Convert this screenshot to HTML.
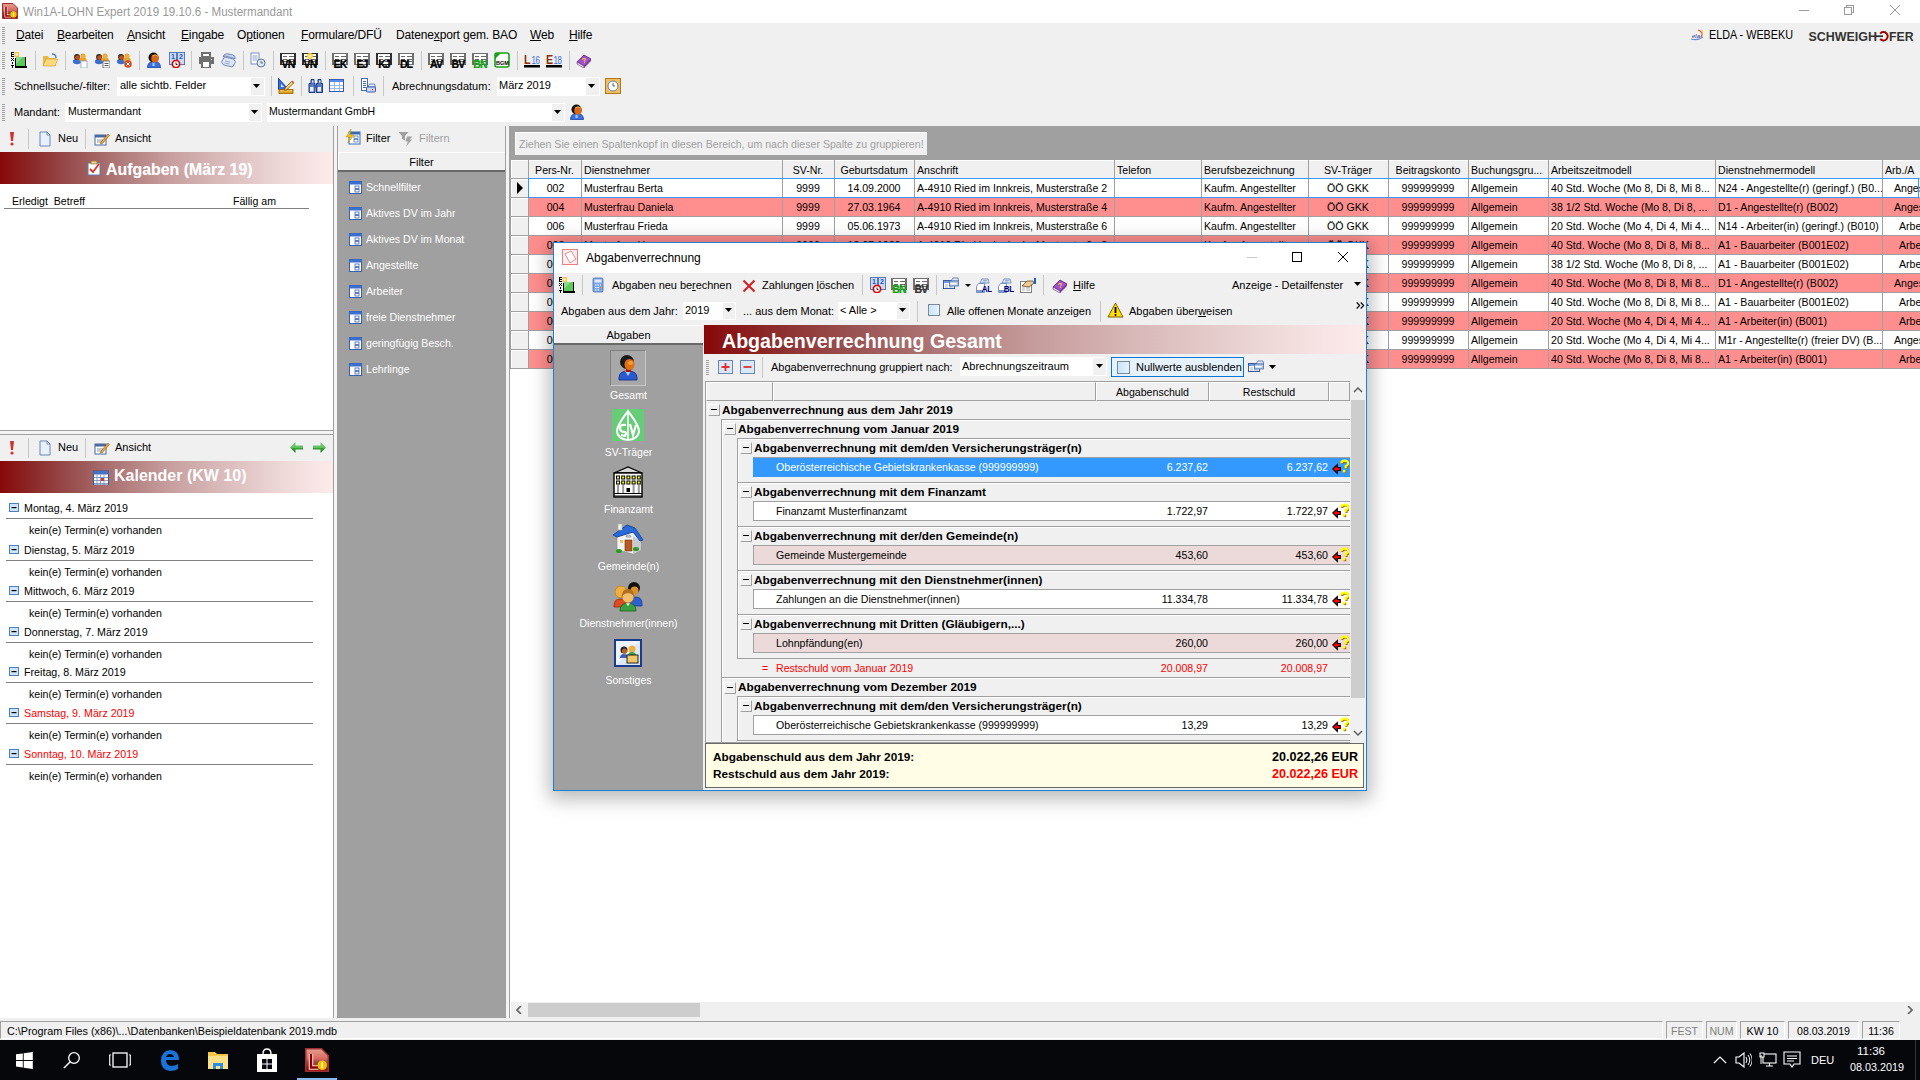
<!DOCTYPE html><html><head><meta charset="utf-8"><style>
*{margin:0;padding:0}
html,body{width:1920px;height:1080px;overflow:hidden;background:#f0f0f0;font-family:"Liberation Sans",sans-serif;position:relative}
body>div{position:absolute}
.t{white-space:nowrap}
u{text-decoration:underline;text-underline-offset:1px}
</style></head><body><div style="left:0px;top:0px;width:1920px;height:23px;background:#fff"></div><div style="left:0px;top:23px;width:1920px;height:103px;background:#f0f0f0"></div><svg style="position:absolute;left:2px;top:3px" width="16" height="16" viewBox="0 0 16 16"><defs><linearGradient id="ag1" x1="0" y1="0" x2="0" y2="1"><stop offset="0" stop-color="#e4a090"/><stop offset=".45" stop-color="#d86a60"/><stop offset=".55" stop-color="#a05050"/><stop offset="1" stop-color="#8a0000"/></linearGradient></defs><path d="M.5 .5h10.5l4.5 4.5v10.5H.5z" fill="url(#ag1)" stroke="#a03030" stroke-width="1"/><path d="M4 4v9h5" stroke="#fbe0d0" stroke-width="3" fill="none"/><path d="M4 4v9h5" stroke="#900000" stroke-width="1.6" fill="none"/><circle cx="11.5" cy="11.5" r="3.2" fill="#f0c000"/><path d="M11.5 9.5v4" stroke="#fff6c0" stroke-width="1"/></svg><div class="t" style="left:23px;top:2px;height:20px;line-height:20px;font-size:12.5px;color:#999;font-weight:400;transform:scaleX(0.929);transform-origin:0 0">Win1A-LOHN Expert 2019 19.10.6 - Mustermandant</div><div style="left:1799px;top:10px;width:10px;height:1px;background:#999"></div><div style="left:1846px;top:5px;width:8px;height:8px;border:1px solid #999;box-sizing:border-box"></div><div style="left:1844px;top:7px;width:8px;height:8px;background:#fff;border:1px solid #999;box-sizing:border-box"></div><svg style="position:absolute;left:1889px;top:4px" width="12" height="12" viewBox="0 0 12 12"><path d="M1 1l10 10M11 1L1 11" stroke="#999" stroke-width="1"/></svg><div style="left:2px;top:27px;width:3px;height:1px;background:#a0a0a0"></div><div style="left:2px;top:29px;width:3px;height:1px;background:#a0a0a0"></div><div style="left:2px;top:31px;width:3px;height:1px;background:#a0a0a0"></div><div style="left:2px;top:33px;width:3px;height:1px;background:#a0a0a0"></div><div style="left:2px;top:35px;width:3px;height:1px;background:#a0a0a0"></div><div style="left:2px;top:37px;width:3px;height:1px;background:#a0a0a0"></div><div style="left:2px;top:39px;width:3px;height:1px;background:#a0a0a0"></div><div style="left:2px;top:41px;width:3px;height:1px;background:#a0a0a0"></div><div style="left:2px;top:43px;width:3px;height:1px;background:#a0a0a0"></div><div class="t" style="left:16px;top:25px;height:20px;line-height:20px;font-size:12px;color:#000;font-weight:400;letter-spacing:-0.15px"><u>D</u>atei</div><div class="t" style="left:57px;top:25px;height:20px;line-height:20px;font-size:12px;color:#000;font-weight:400;letter-spacing:-0.15px"><u>B</u>earbeiten</div><div class="t" style="left:127px;top:25px;height:20px;line-height:20px;font-size:12px;color:#000;font-weight:400;letter-spacing:-0.15px"><u>A</u>nsicht</div><div class="t" style="left:181px;top:25px;height:20px;line-height:20px;font-size:12px;color:#000;font-weight:400;letter-spacing:-0.15px"><u>E</u>ingabe</div><div class="t" style="left:237px;top:25px;height:20px;line-height:20px;font-size:12px;color:#000;font-weight:400;letter-spacing:-0.15px">O<u>p</u>tionen</div><div class="t" style="left:301px;top:25px;height:20px;line-height:20px;font-size:12px;color:#000;font-weight:400;letter-spacing:-0.15px"><u>F</u>ormulare/DFÜ</div><div class="t" style="left:396px;top:25px;height:20px;line-height:20px;font-size:12px;color:#000;font-weight:400;letter-spacing:-0.15px">Datene<u>x</u>port gem. BAO</div><div class="t" style="left:530px;top:25px;height:20px;line-height:20px;font-size:12px;color:#000;font-weight:400;letter-spacing:-0.15px"><u>W</u>eb</div><div class="t" style="left:569px;top:25px;height:20px;line-height:20px;font-size:12px;color:#000;font-weight:400;letter-spacing:-0.15px"><u>H</u>ilfe</div><svg style="position:absolute;left:1689px;top:27px" width="16" height="16" viewBox="0 0 16 16"><path d="M2 12q6 2 12-2" stroke="#6a8ad0" stroke-width="1.2" fill="none"/><path d="M9 3q6 2 3 7" stroke="#e05030" stroke-width="1.3" fill="none"/><text x="3" y="11" font-size="6" font-style="italic" fill="#2040a0" font-family="Liberation Sans">ela</text><path d="M12 8q2-2 1-5" stroke="#f0c020" stroke-width="1" fill="none"/></svg><div class="t" style="left:1709px;top:25px;height:20px;line-height:20px;font-size:12px;color:#000;font-weight:400;transform:scaleX(0.9);transform-origin:0 0">ELDA - WEBEKU</div><svg style="position:absolute;left:1805px;top:28px" width="112" height="16" viewBox="0 0 112 16"><g font-family="Liberation Sans" font-weight="700" font-size="13" fill="#333"><text x="3.5" y="12.6" textLength="68.5" lengthAdjust="spacingAndGlyphs">SCHWEIGH</text><text x="84" y="12.6" textLength="24.5" lengthAdjust="spacingAndGlyphs">FER</text></g><path d="M70 8.2h8" stroke="#333" stroke-width="1.8"/><path d="M75.2 5.7A4.2 4.2 0 1 1 75.2 10.9" stroke="#a00000" stroke-width="2" fill="none"/></svg><div style="left:2px;top:52px;width:3px;height:1px;background:#a0a0a0"></div><div style="left:2px;top:54px;width:3px;height:1px;background:#a0a0a0"></div><div style="left:2px;top:56px;width:3px;height:1px;background:#a0a0a0"></div><div style="left:2px;top:58px;width:3px;height:1px;background:#a0a0a0"></div><div style="left:2px;top:60px;width:3px;height:1px;background:#a0a0a0"></div><div style="left:2px;top:62px;width:3px;height:1px;background:#a0a0a0"></div><div style="left:2px;top:64px;width:3px;height:1px;background:#a0a0a0"></div><div style="left:2px;top:66px;width:3px;height:1px;background:#a0a0a0"></div><div style="left:2px;top:68px;width:3px;height:1px;background:#a0a0a0"></div><svg style="position:absolute;left:11px;top:52px" width="16" height="16" viewBox="0 0 16 16"><g shape-rendering="crispEdges" fill="#000"><rect x="0" y="0" width="3" height="1"/><rect x="0" y="0" width="1" height="5"/><rect x="0" y="2" width="3" height="1"/><rect x="0" y="4" width="3" height="1"/><rect x="0" y="6" width="1" height="1"/><rect x="2" y="6" width="1" height="1"/><rect x="1" y="7" width="1" height="1"/><rect x="0" y="8" width="1" height="1"/><rect x="2" y="8" width="1" height="1"/><rect x="1" y="10" width="1" height="2"/><rect x="0" y="13" width="3" height="1"/><rect x="1" y="13" width="1" height="3"/><rect x="4" y="6" width="1" height="9"/><rect x="4" y="14" width="12" height="2"/><rect x="14" y="5" width="1" height="10"/></g><rect x="5" y="5" width="9" height="9" fill="#5ac85a"/><path d="M5 5h7L5 12z" fill="#8ad88a"/><rect x="3.5" y="0" width="4.5" height="5" fill="#f8c040"/><circle cx="5.7" cy="2.5" r="1.3" fill="#fff8c0"/></svg><div style="left:35px;top:51px;width:1px;height:19px;background:#c8c8c8"></div><svg style="position:absolute;left:42px;top:52px" width="16" height="16" viewBox="0 0 16 16"><path d="M1 4h5l1 2h7v8H1z" fill="#e8b84a"/><path d="M1 14l3-7h12l-3 7z" fill="#ffd97a" stroke="#c89a3a" stroke-width=".6"/><path d="M10 2q4 0 4 4" stroke="#4a7fc0" fill="none" stroke-width="1.3"/></svg><div style="left:65px;top:51px;width:1px;height:19px;background:#c8c8c8"></div><svg style="position:absolute;left:72px;top:52px" width="16" height="16" viewBox="0 0 16 16"><ellipse cx="5" cy="9.5" rx="4.05" ry="2.7" fill="#3a6fd0"/><circle cx="5" cy="5" r="2.8800000000000003" fill="#222"/><circle cx="5.36" cy="5.54" r="2.3400000000000003" fill="#c0531a"/><ellipse cx="11" cy="8.0" rx="3.6" ry="2.4000000000000004" fill="#e8a030"/><circle cx="11" cy="4" r="2.5600000000000005" fill="#e8a030"/><circle cx="11.32" cy="4.48" r="2.08" fill="#f0b040"/><rect x="9" y="9" width="6" height="7" fill="#fff" stroke="#7a9ac0" stroke-width=".7"/></svg><svg style="position:absolute;left:94px;top:52px" width="16" height="16" viewBox="0 0 16 16"><ellipse cx="5" cy="9.5" rx="4.05" ry="2.7" fill="#3a6fd0"/><circle cx="5" cy="5" r="2.8800000000000003" fill="#222"/><circle cx="5.36" cy="5.54" r="2.3400000000000003" fill="#c0531a"/><ellipse cx="11" cy="8.0" rx="3.6" ry="2.4000000000000004" fill="#e8a030"/><circle cx="11" cy="4" r="2.5600000000000005" fill="#e8a030"/><circle cx="11.32" cy="4.48" r="2.08" fill="#f0b040"/><rect x="9" y="9" width="7" height="7" fill="#fff" stroke="#555" stroke-width=".8"/><path d="M10.5 11.5h4M10.5 13.5h4" stroke="#333" stroke-width=".8"/></svg><svg style="position:absolute;left:116px;top:52px" width="16" height="16" viewBox="0 0 16 16"><ellipse cx="5" cy="9.5" rx="4.05" ry="2.7" fill="#3a6fd0"/><circle cx="5" cy="5" r="2.8800000000000003" fill="#222"/><circle cx="5.36" cy="5.54" r="2.3400000000000003" fill="#c0531a"/><ellipse cx="11" cy="8.0" rx="3.6" ry="2.4000000000000004" fill="#e8a030"/><circle cx="11" cy="4" r="2.5600000000000005" fill="#e8a030"/><circle cx="11.32" cy="4.48" r="2.08" fill="#f0b040"/><circle cx="12" cy="12" r="3.8" fill="#d0502a"/><path d="M10.5 10.5l3 3M13.5 10.5l-3 3" stroke="#fff" stroke-width="1"/></svg><div style="left:139px;top:51px;width:1px;height:19px;background:#c8c8c8"></div><svg style="position:absolute;left:146px;top:52px" width="16" height="16" viewBox="0 0 16 16"><path d="M1.5 15.5q0-6 6.5-6t6.5 6z" fill="#3a70e0" stroke="#1a40a0" stroke-width=".8"/><rect x="6.5" y="10" width="2" height="4" fill="#aad0ff"/><circle cx="7.5" cy="5.5" r="5" fill="#111"/><ellipse cx="9" cy="6.5" rx="3.8" ry="4" fill="#d86818"/><path d="M6 4q3-2 6 0" stroke="#f0a040" stroke-width="1" fill="none"/></svg><svg style="position:absolute;left:169px;top:52px" width="16" height="16" viewBox="0 0 16 16"><g shape-rendering="crispEdges"><rect x="0.5" y="0.5" width="7" height="12" fill="#c8dcf8" stroke="#5a7ab0" stroke-width="1"/><rect x="8.5" y="0.5" width="7" height="12" fill="#c8dcf8" stroke="#5a7ab0" stroke-width="1"/></g><text x="2" y="7" font-size="7" font-weight="700" fill="#1a50d0" font-family="Liberation Sans">1</text><text x="10" y="7" font-size="7" font-weight="700" fill="#1a50d0" font-family="Liberation Sans">2</text><path d="M5.5 8.5h3l2 2v3l-2 2h-3l-2-2v-3z" fill="#fff" stroke="#e00000" stroke-width="1.6"/><path d="M7 10.5v2h1.5" stroke="#000" stroke-width=".9" fill="none"/></svg><div style="left:191px;top:51px;width:1px;height:19px;background:#c8c8c8"></div><svg style="position:absolute;left:198px;top:52px" width="16" height="16" viewBox="0 0 16 16"><g shape-rendering="crispEdges"><rect x="4" y="1" width="8" height="4" fill="#fff" stroke="#707070" stroke-width="1.2"/><rect x="0.5" y="5" width="15" height="7" fill="#707070"/><rect x="4" y="9.5" width="8" height="6" fill="#fff" stroke="#707070" stroke-width="1.2"/><rect x="13" y="7" width="1" height="1" fill="#fff"/></g></svg><svg style="position:absolute;left:220px;top:52px" width="16" height="16" viewBox="0 0 16 16"><path d="M1.5 10l3-5 9 2 2 3-3 5-9-2z" fill="#dde6f6" stroke="#6a80b0" stroke-width=".9"/><path d="M3 5q1-4 6-3l4 1q3 1 2 4l-2-1-8-2z" fill="#c8d4ec" stroke="#6a80b0" stroke-width=".9"/><path d="M5 9l5 1M4.5 11l5 1" stroke="#8a9ac0" stroke-width=".8"/></svg><div style="left:243px;top:51px;width:1px;height:19px;background:#c8c8c8"></div><svg style="position:absolute;left:250px;top:52px" width="16" height="16" viewBox="0 0 16 16"><rect x="1" y="1" width="8" height="11" fill="#fff" stroke="#5a7ab0" stroke-width=".8"/><path d="M2.5 4h5M2.5 6h5M2.5 8h5" stroke="#5a7ab0" stroke-width=".7"/><circle cx="11" cy="11" r="4" fill="#dde8f8" stroke="#3a5a90" stroke-width=".8"/><path d="M11 9v2h2" stroke="#333" stroke-width=".7" fill="none"/></svg><div style="left:273px;top:51px;width:1px;height:19px;background:#c8c8c8"></div><svg style="position:absolute;left:280px;top:52px" width="16" height="16" viewBox="0 0 16 16"><g shape-rendering="crispEdges"><rect x="1" y="1.5" width="14" height="11" fill="#fff" stroke="#303030" stroke-width="1.4"/><path d="M3 4.5h4M9 4.5h5M3 7h4M9 7h5M3 9.5h4M9 9.5h5" stroke="#666" stroke-width="1"/></g><text x="8" y="16.3" text-anchor="middle" font-size="10.5" font-weight="700" fill="#000" stroke="#000" stroke-width=".3" font-family="Liberation Sans" letter-spacing="-.9">VN</text></svg><svg style="position:absolute;left:302px;top:52px" width="16" height="16" viewBox="0 0 16 16"><g shape-rendering="crispEdges"><rect x="1" y="1.5" width="14" height="11" fill="#fff" stroke="#303030" stroke-width="1.4"/><path d="M3 4.5h4M9 4.5h5M3 7h4M9 7h5M3 9.5h4M9 9.5h5" stroke="#666" stroke-width="1"/></g><text x="8" y="16.3" text-anchor="middle" font-size="10.5" font-weight="700" fill="#000" stroke="#000" stroke-width=".3" font-family="Liberation Sans" letter-spacing="-.9">VN</text><circle cx="8" cy="4" r="3" fill="#ffcc30"/><circle cx="8" cy="4" r="1.5" fill="#fff6a0"/></svg><div style="left:325px;top:51px;width:1px;height:19px;background:#c8c8c8"></div><svg style="position:absolute;left:332px;top:52px" width="16" height="16" viewBox="0 0 16 16"><g shape-rendering="crispEdges"><rect x="1" y="1.5" width="14" height="11" fill="#fff" stroke="#707070" stroke-width="1.4"/><path d="M3 4.5h4M9 4.5h5M3 7h4M9 7h5M3 9.5h4M9 9.5h5" stroke="#666" stroke-width="1"/></g><text x="8" y="16.3" text-anchor="middle" font-size="10.5" font-weight="700" fill="#000" stroke="#000" stroke-width=".3" font-family="Liberation Sans" letter-spacing="-.9">EK</text></svg><svg style="position:absolute;left:354px;top:52px" width="16" height="16" viewBox="0 0 16 16"><g shape-rendering="crispEdges"><rect x="1" y="1.5" width="14" height="11" fill="#fff" stroke="#707070" stroke-width="1.4"/><path d="M3 4.5h4M9 4.5h5M3 7h4M9 7h5M3 9.5h4M9 9.5h5" stroke="#666" stroke-width="1"/></g><text x="8" y="16.3" text-anchor="middle" font-size="10.5" font-weight="700" fill="#000" stroke="#000" stroke-width=".3" font-family="Liberation Sans" letter-spacing="-.9">EJ</text></svg><svg style="position:absolute;left:376px;top:52px" width="16" height="16" viewBox="0 0 16 16"><g shape-rendering="crispEdges"><rect x="1" y="1.5" width="14" height="11" fill="#fff" stroke="#303030" stroke-width="1.4"/><path d="M3 4.5h4M9 4.5h5M3 7h4M9 7h5M3 9.5h4M9 9.5h5" stroke="#666" stroke-width="1"/></g><text x="8" y="16.3" text-anchor="middle" font-size="10.5" font-weight="700" fill="#000" stroke="#000" stroke-width=".3" font-family="Liberation Sans" letter-spacing="-.9">KJ</text></svg><svg style="position:absolute;left:398px;top:52px" width="16" height="16" viewBox="0 0 16 16"><g shape-rendering="crispEdges"><rect x="1" y="1.5" width="14" height="11" fill="#fff" stroke="#707070" stroke-width="1.4"/><path d="M3 4.5h4M9 4.5h5M3 7h4M9 7h5M3 9.5h4M9 9.5h5" stroke="#666" stroke-width="1"/></g><text x="8" y="16.3" text-anchor="middle" font-size="10.5" font-weight="700" fill="#000" stroke="#000" stroke-width=".3" font-family="Liberation Sans" letter-spacing="-.9">DL</text></svg><div style="left:421px;top:51px;width:1px;height:19px;background:#c8c8c8"></div><svg style="position:absolute;left:428px;top:52px" width="16" height="16" viewBox="0 0 16 16"><g shape-rendering="crispEdges"><rect x="1" y="1.5" width="14" height="11" fill="#fff" stroke="#707070" stroke-width="1.4"/><path d="M3 4.5h4M9 4.5h5M3 7h4M9 7h5M3 9.5h4M9 9.5h5" stroke="#666" stroke-width="1"/></g><text x="8" y="16.3" text-anchor="middle" font-size="10.5" font-weight="700" fill="#000" stroke="#000" stroke-width=".3" font-family="Liberation Sans" letter-spacing="-.9">AV</text></svg><svg style="position:absolute;left:450px;top:52px" width="16" height="16" viewBox="0 0 16 16"><g shape-rendering="crispEdges"><rect x="1" y="1.5" width="14" height="11" fill="#fff" stroke="#707070" stroke-width="1.4"/><path d="M3 4.5h4M9 4.5h5M3 7h4M9 7h5M3 9.5h4M9 9.5h5" stroke="#666" stroke-width="1"/></g><text x="8" y="16.3" text-anchor="middle" font-size="10.5" font-weight="700" fill="#000" stroke="#000" stroke-width=".3" font-family="Liberation Sans" letter-spacing="-.9">BV</text></svg><svg style="position:absolute;left:472px;top:52px" width="16" height="16" viewBox="0 0 16 16"><g shape-rendering="crispEdges"><rect x="1" y="1.5" width="14" height="11" fill="#fff" stroke="#707070" stroke-width="1.4"/><path d="M3 4.5h4M9 4.5h5M3 7h4M9 7h5M3 9.5h4M9 9.5h5" stroke="#666" stroke-width="1"/></g><text x="8" y="16.3" text-anchor="middle" font-size="10.5" font-weight="700" fill="#18a018" stroke="#18a018" stroke-width=".3" font-family="Liberation Sans" letter-spacing="-.9">BN</text></svg><svg style="position:absolute;left:494px;top:52px" width="16" height="16" viewBox="0 0 16 16"><rect x="1" y="1" width="14" height="14" rx="2" fill="#fff" stroke="#18a018" stroke-width="1.6"/><path d="M1 1h6l-6 6z" fill="#18a018"/><text x="2" y="13" font-size="5.5" font-weight="700" fill="#000" font-family="Liberation Sans">BGM</text></svg><div style="left:517px;top:51px;width:1px;height:19px;background:#c8c8c8"></div><svg style="position:absolute;left:524px;top:52px" width="16" height="16" viewBox="0 0 16 16"><text x="0" y="12" font-size="12.5" font-weight="700" fill="#8b3000" font-family="Liberation Sans" transform="scale(.85,1)">L</text><text x="10.5" y="12" font-size="11" fill="#3a6ae8" font-family="Liberation Sans" transform="scale(.72,1)" letter-spacing="-.8">16</text><rect x="0" y="13" width="16" height="2.5" fill="#000"/></svg><svg style="position:absolute;left:546px;top:52px" width="16" height="16" viewBox="0 0 16 16"><text x="0" y="12" font-size="12.5" font-weight="700" fill="#8b3000" font-family="Liberation Sans" transform="scale(.85,1)">E</text><text x="10.5" y="12" font-size="11" fill="#3a6ae8" font-family="Liberation Sans" transform="scale(.72,1)" letter-spacing="-.8">18</text><rect x="0" y="13" width="16" height="2.5" fill="#000"/></svg><div style="left:569px;top:51px;width:1px;height:19px;background:#c8c8c8"></div><svg style="position:absolute;left:576px;top:52px" width="16" height="16" viewBox="0 0 16 16"><path d="M1 10l7-7 7 4-7 7z" fill="#a050c8" stroke="#5a2080" stroke-width=".8"/><path d="M1 10v2l7 4v-2z" fill="#eee" stroke="#5a2080" stroke-width=".6"/><path d="M8 14v2l7-7V7z" fill="#7a3aa0"/><text x="6" y="11" font-size="7" font-weight="700" fill="#ffd030" font-family="Liberation Sans" transform="rotate(-10 8 8)">?</text></svg><div style="left:2px;top:78px;width:3px;height:1px;background:#a0a0a0"></div><div style="left:2px;top:80px;width:3px;height:1px;background:#a0a0a0"></div><div style="left:2px;top:82px;width:3px;height:1px;background:#a0a0a0"></div><div style="left:2px;top:84px;width:3px;height:1px;background:#a0a0a0"></div><div style="left:2px;top:86px;width:3px;height:1px;background:#a0a0a0"></div><div style="left:2px;top:88px;width:3px;height:1px;background:#a0a0a0"></div><div style="left:2px;top:90px;width:3px;height:1px;background:#a0a0a0"></div><div style="left:2px;top:92px;width:3px;height:1px;background:#a0a0a0"></div><div style="left:2px;top:94px;width:3px;height:1px;background:#a0a0a0"></div><div class="t" style="left:14px;top:76px;height:20px;line-height:20px;font-size:11px;color:#000;font-weight:400;">Schnellsuche/-filter:</div><div style="left:117px;top:77px;width:148px;height:19px;background:#fff"></div><div style="left:250px;top:77px;width:15px;height:19px;background:#f0f0f0;border:1px solid #fff;box-sizing:border-box"></div><svg style="position:absolute;left:253px;top:84px" width="8" height="5" viewBox="0 0 8 5"><path d="M0 0h7L3.5 4z" fill="#000"/></svg><div class="t" style="left:120px;top:75px;height:20px;line-height:20px;font-size:11px;color:#000;font-weight:400;">alle sichtb. Felder</div><div style="left:271px;top:76px;width:1px;height:20px;background:#c8c8c8"></div><div style="left:301px;top:76px;width:1px;height:20px;background:#c8c8c8"></div><div style="left:353px;top:76px;width:1px;height:20px;background:#c8c8c8"></div><div style="left:383px;top:76px;width:1px;height:20px;background:#c8c8c8"></div><svg style="position:absolute;left:278px;top:78px" width="16" height="16" viewBox="0 0 16 16"><path d="M0.5 0.5v11h10z" fill="#3a6ee8" stroke="#1a40a0" stroke-width="1"/><path d="M3 6v3h3z" fill="#f0f0f0"/><rect x="1" y="11.5" width="14" height="4" fill="#e0a020" stroke="#a06000" stroke-width=".8"/><path d="M3 12v1.5M5 12v1.5M7 12v1.5M9 12v1.5M11 12v1.5M13 12v1.5" stroke="#fff4a0" stroke-width=".7"/><path d="M7 10l6.5-6.5 1.8 1.8L8.8 11.8 6.5 12.3z" fill="#f8d060" stroke="#604010" stroke-width=".7"/><path d="M13.5 3.5l1-1 1.8 1.8-1 1z" fill="#e05050"/></svg><svg style="position:absolute;left:308px;top:78px" width="16" height="16" viewBox="0 0 16 16"><g stroke="#1a3a80" stroke-width="1"><path d="M3 1.5h3v4h1v9H1v-9h2z" fill="#5a7ac8"/><path d="M10 1.5h3v4h1.5v9h-6v-9H10z" fill="#5a7ac8"/></g><rect x="2" y="9" width="3.5" height="4.5" fill="#e8eefa"/><rect x="9.5" y="9" width="3.5" height="4.5" fill="#e8eefa"/><rect x="4" y="2.5" width="1.5" height="2" fill="#e8eefa"/><rect x="11" y="2.5" width="1.5" height="2" fill="#e8eefa"/><rect x="6.5" y="7" width="3" height="3" fill="#3a5aa8"/></svg><svg style="position:absolute;left:329px;top:78px" width="16" height="16" viewBox="0 0 16 16"><g shape-rendering="crispEdges"><rect x="0.5" y="1.5" width="14" height="12" fill="#fff" stroke="#3a5ab0" stroke-width="1"/><rect x="1" y="2" width="13" height="2" fill="#5a8ae8"/><path d="M1 7h13M1 10h13M5.5 4v9M10 4v9" stroke="#9ab8e8" stroke-width="1"/></g></svg><svg style="position:absolute;left:360px;top:78px" width="16" height="16" viewBox="0 0 16 16"><g shape-rendering="crispEdges"><rect x="1.5" y="0.5" width="6" height="12" fill="#fff" stroke="#4a6ab0" stroke-width="1"/><path d="M3 3h3M3 5h3M3 7h3M3 9h3" stroke="#4a6ab0" stroke-width="1"/></g><path d="M8 9l1.5-3h5l1 3z" fill="#e8f0fa" stroke="#4a6ab0" stroke-width=".8"/><rect x="6.5" y="9" width="9" height="5" rx="1" fill="#c8d8f0" stroke="#3a5ab0" stroke-width="1"/><rect x="12" y="11" width="1.2" height="1.2" fill="#e03030"/></svg><div class="t" style="left:392px;top:76px;height:20px;line-height:20px;font-size:11px;color:#000;font-weight:400;">Abrechnungsdatum:</div><div style="left:497px;top:77px;width:103px;height:19px;background:#fff"></div><div style="left:585px;top:77px;width:15px;height:19px;background:#f0f0f0;border:1px solid #fff;box-sizing:border-box"></div><svg style="position:absolute;left:588px;top:84px" width="8" height="5" viewBox="0 0 8 5"><path d="M0 0h7L3.5 4z" fill="#000"/></svg><div class="t" style="left:499px;top:75px;height:20px;line-height:20px;font-size:11px;color:#000;font-weight:400;">März 2019</div><svg style="position:absolute;left:605px;top:78px" width="16" height="16" viewBox="0 0 16 16"><rect x="0.5" y="0.5" width="15" height="15" fill="#f0c060" stroke="#b07820" stroke-width="1"/><circle cx="8" cy="8" r="5" fill="#fff" stroke="#6080b0" stroke-width="1"/><path d="M8 5v3h2" stroke="#333" stroke-width=".8" fill="none"/></svg><div style="left:2px;top:104px;width:3px;height:1px;background:#a0a0a0"></div><div style="left:2px;top:106px;width:3px;height:1px;background:#a0a0a0"></div><div style="left:2px;top:108px;width:3px;height:1px;background:#a0a0a0"></div><div style="left:2px;top:110px;width:3px;height:1px;background:#a0a0a0"></div><div style="left:2px;top:112px;width:3px;height:1px;background:#a0a0a0"></div><div style="left:2px;top:114px;width:3px;height:1px;background:#a0a0a0"></div><div style="left:2px;top:116px;width:3px;height:1px;background:#a0a0a0"></div><div style="left:2px;top:118px;width:3px;height:1px;background:#a0a0a0"></div><div style="left:2px;top:120px;width:3px;height:1px;background:#a0a0a0"></div><div class="t" style="left:14px;top:102px;height:20px;line-height:20px;font-size:11px;color:#000;font-weight:400;">Mandant:</div><div style="left:65px;top:103px;width:197px;height:19px;background:#fff"></div><div style="left:248px;top:103px;width:14px;height:19px;background:#f0f0f0;border:1px solid #fff;box-sizing:border-box"></div><svg style="position:absolute;left:251px;top:110px" width="8" height="5" viewBox="0 0 8 5"><path d="M0 0h7L3.5 4z" fill="#000"/></svg><div class="t" style="left:68px;top:101px;height:20px;line-height:20px;font-size:10.5px;color:#000;font-weight:400;">Mustermandant</div><div style="left:267px;top:103px;width:298px;height:19px;background:#fff"></div><div style="left:551px;top:103px;width:14px;height:19px;background:#f0f0f0;border:1px solid #fff;box-sizing:border-box"></div><svg style="position:absolute;left:554px;top:110px" width="8" height="5" viewBox="0 0 8 5"><path d="M0 0h7L3.5 4z" fill="#000"/></svg><div class="t" style="left:269px;top:101px;height:20px;line-height:20px;font-size:10.5px;color:#000;font-weight:400;">Mustermandant GmbH</div><svg style="position:absolute;left:569px;top:104px" width="16" height="16" viewBox="0 0 16 16"><path d="M1.5 15.5q0-6 6.5-6t6.5 6z" fill="#3a70e0" stroke="#1a40a0" stroke-width=".8"/><rect x="6.5" y="10" width="2" height="4" fill="#aad0ff"/><circle cx="7.5" cy="5.5" r="5" fill="#111"/><ellipse cx="9" cy="6.5" rx="3.8" ry="4" fill="#d86818"/><path d="M6 4q3-2 6 0" stroke="#f0a040" stroke-width="1" fill="none"/></svg><div style="left:0px;top:126px;width:333px;height:892px;background:#fff"></div><div style="left:0px;top:126px;width:333px;height:26px;background:#f0f0f0"></div><svg style="position:absolute;left:4px;top:131px" width="16" height="16" viewBox="0 0 16 16"><path d="M6 1h4l-1 9H7z" fill="#d03030"/><circle cx="8" cy="13" r="1.6" fill="#d03030"/></svg><div style="left:28px;top:129px;width:1px;height:20px;background:#c8c8c8"></div><svg style="position:absolute;left:37px;top:131px" width="16" height="16" viewBox="0 0 16 16"><path d="M3 1h7l3 3v11H3z" fill="#e8f0fc" stroke="#5a7ab0" stroke-width=".9"/><path d="M10 1v3h3" fill="none" stroke="#5a7ab0" stroke-width=".8"/></svg><div class="t" style="left:58px;top:128px;height:20px;line-height:20px;font-size:11px;color:#000;font-weight:400;">Neu</div><div style="left:85px;top:129px;width:1px;height:20px;background:#c8c8c8"></div><svg style="position:absolute;left:94px;top:131px" width="16" height="16" viewBox="0 0 16 16"><rect x="1" y="4" width="11" height="10" fill="#fff" stroke="#4a6aa0" stroke-width="1"/><rect x="1" y="4" width="11" height="2.5" fill="#4a6aa0"/><path d="M3 9h6M3 11h6" stroke="#4a6aa0" stroke-width=".7"/><path d="M7 11l7-8 1.5 1.5-7 8-2 .5z" fill="#f0a030" stroke="#805010" stroke-width=".5"/></svg><div class="t" style="left:115px;top:128px;height:20px;line-height:20px;font-size:11px;color:#000;font-weight:400;">Ansicht</div><div style="left:0px;top:152px;width:333px;height:32px;background:linear-gradient(to right,#880808 0%,#8c2a2a 10%,#995050 22%,#ae7676 35%,#c69c9c 50%,#d8b8b8 65%,#e8d0d0 80%,#f6e2e2 92%,#fdeaea 100%);image-rendering:pixelated"></div><svg style="position:absolute;left:87px;top:161px" width="14" height="15" viewBox="0 0 14 15"><rect x="1" y="2" width="12" height="12" fill="#fff" stroke="#5a7ab0" stroke-width="1"/><rect x="4" y="0" width="6" height="3" fill="#f0d080" stroke="#806020" stroke-width=".6"/><path d="M3 8l3 3 6-8" stroke="#e03020" stroke-width="1.8" fill="none"/></svg><div class="t" style="left:106px;top:160px;height:20px;line-height:20px;font-size:15.9px;color:#fff;font-weight:700;text-shadow:0 0 1px rgba(255,255,255,.4)">Aufgaben (März 19)</div><div class="t" style="left:12px;top:191px;height:20px;line-height:20px;font-size:10.6px;color:#000;font-weight:400;">Erledigt&nbsp; Betreff</div><div class="t" style="left:233px;top:191px;height:20px;line-height:20px;font-size:10.6px;color:#000;font-weight:400;">Fällig am</div><div style="left:4px;top:208px;width:305px;height:1px;background:#808080"></div><div style="left:0px;top:430px;width:333px;height:5px;background:#f4f4f4"></div><div style="left:0px;top:430px;width:333px;height:1px;background:#a0a0a0"></div><div style="left:0px;top:434px;width:333px;height:1px;background:#a0a0a0"></div><div style="left:0px;top:435px;width:333px;height:26px;background:#f0f0f0"></div><svg style="position:absolute;left:4px;top:440px" width="16" height="16" viewBox="0 0 16 16"><path d="M6 1h4l-1 9H7z" fill="#d03030"/><circle cx="8" cy="13" r="1.6" fill="#d03030"/></svg><div style="left:28px;top:438px;width:1px;height:20px;background:#c8c8c8"></div><svg style="position:absolute;left:37px;top:440px" width="16" height="16" viewBox="0 0 16 16"><path d="M3 1h7l3 3v11H3z" fill="#e8f0fc" stroke="#5a7ab0" stroke-width=".9"/><path d="M10 1v3h3" fill="none" stroke="#5a7ab0" stroke-width=".8"/></svg><div class="t" style="left:58px;top:437px;height:20px;line-height:20px;font-size:11px;color:#000;font-weight:400;">Neu</div><div style="left:85px;top:438px;width:1px;height:20px;background:#c8c8c8"></div><svg style="position:absolute;left:94px;top:440px" width="16" height="16" viewBox="0 0 16 16"><rect x="1" y="4" width="11" height="10" fill="#fff" stroke="#4a6aa0" stroke-width="1"/><rect x="1" y="4" width="11" height="2.5" fill="#4a6aa0"/><path d="M3 9h6M3 11h6" stroke="#4a6aa0" stroke-width=".7"/><path d="M7 11l7-8 1.5 1.5-7 8-2 .5z" fill="#f0a030" stroke="#805010" stroke-width=".5"/></svg><div class="t" style="left:115px;top:437px;height:20px;line-height:20px;font-size:11px;color:#000;font-weight:400;">Ansicht</div><svg style="position:absolute;left:290px;top:442px" width="13" height="11" viewBox="0 0 13 11"><defs><linearGradient id="arl" x1="0" y1="0" x2="0" y2="1"><stop offset="0" stop-color="#80d080"/><stop offset=".5" stop-color="#60c060"/><stop offset=".55" stop-color="#40a040"/><stop offset="1" stop-color="#008a00"/></linearGradient></defs><path d="M0 5.5L5.5 0v3.5H13v4H5.5V11z" fill="url(#arl)"/></svg><svg style="position:absolute;left:313px;top:442px" width="13" height="11" viewBox="0 0 13 11"><defs><linearGradient id="arr" x1="0" y1="0" x2="0" y2="1"><stop offset="0" stop-color="#80d080"/><stop offset=".5" stop-color="#60c060"/><stop offset=".55" stop-color="#40a040"/><stop offset="1" stop-color="#008a00"/></linearGradient></defs><path d="M13 5.5L7.5 0v3.5H0v4h7.5V11z" fill="url(#arr)"/></svg><div style="left:0px;top:461px;width:333px;height:32px;background:linear-gradient(to right,#880808 0%,#8c2a2a 10%,#995050 22%,#ae7676 35%,#c69c9c 50%,#d8b8b8 65%,#e8d0d0 80%,#f6e2e2 92%,#fdeaea 100%)"></div><svg style="position:absolute;left:93px;top:470px" width="16" height="15" viewBox="0 0 16 15"><rect x="0.5" y="1" width="15" height="14" fill="#fff" stroke="#3a5a90" stroke-width="1"/><rect x="0.5" y="1" width="15" height="3.5" fill="#4a70c0"/><path d="M1 7.5h14M1 10.5h14M1 13.5h14M4 4.5v10M7.5 4.5v10M11 4.5v10" stroke="#6a8ac0" stroke-width=".8"/><rect x="8" y="8" width="3" height="3" fill="#e03030"/></svg><div class="t" style="left:114px;top:466px;height:20px;line-height:20px;font-size:16px;color:#fff;font-weight:700;">Kalender (KW 10)</div><svg style="position:absolute;left:9px;top:503px" width="10" height="9" viewBox="0 0 10 9"><rect x="0.5" y="0.5" width="9" height="8" fill="#cfe4fa" stroke="#4a80c0" stroke-width="1"/><rect x="2.5" y="4" width="5" height="1.2" fill="#000"/></svg><div class="t" style="left:24px;top:498px;height:20px;line-height:20px;font-size:10.7px;color:#000;font-weight:400;">Montag, 4. März 2019</div><div style="left:6px;top:518px;width:307px;height:1px;background:#808080"></div><div class="t" style="left:29px;top:520px;height:20px;line-height:20px;font-size:10.6px;color:#000;font-weight:400;">kein(e) Termin(e) vorhanden</div><svg style="position:absolute;left:9px;top:545px" width="10" height="9" viewBox="0 0 10 9"><rect x="0.5" y="0.5" width="9" height="8" fill="#cfe4fa" stroke="#4a80c0" stroke-width="1"/><rect x="2.5" y="4" width="5" height="1.2" fill="#000"/></svg><div class="t" style="left:24px;top:540px;height:20px;line-height:20px;font-size:10.7px;color:#000;font-weight:400;">Dienstag, 5. März 2019</div><div style="left:6px;top:560px;width:307px;height:1px;background:#808080"></div><div class="t" style="left:29px;top:562px;height:20px;line-height:20px;font-size:10.6px;color:#000;font-weight:400;">kein(e) Termin(e) vorhanden</div><svg style="position:absolute;left:9px;top:586px" width="10" height="9" viewBox="0 0 10 9"><rect x="0.5" y="0.5" width="9" height="8" fill="#cfe4fa" stroke="#4a80c0" stroke-width="1"/><rect x="2.5" y="4" width="5" height="1.2" fill="#000"/></svg><div class="t" style="left:24px;top:581px;height:20px;line-height:20px;font-size:10.7px;color:#000;font-weight:400;">Mittwoch, 6. März 2019</div><div style="left:6px;top:601px;width:307px;height:1px;background:#808080"></div><div class="t" style="left:29px;top:603px;height:20px;line-height:20px;font-size:10.6px;color:#000;font-weight:400;">kein(e) Termin(e) vorhanden</div><svg style="position:absolute;left:9px;top:627px" width="10" height="9" viewBox="0 0 10 9"><rect x="0.5" y="0.5" width="9" height="8" fill="#cfe4fa" stroke="#4a80c0" stroke-width="1"/><rect x="2.5" y="4" width="5" height="1.2" fill="#000"/></svg><div class="t" style="left:24px;top:622px;height:20px;line-height:20px;font-size:10.7px;color:#000;font-weight:400;">Donnerstag, 7. März 2019</div><div style="left:6px;top:642px;width:307px;height:1px;background:#808080"></div><div class="t" style="left:29px;top:644px;height:20px;line-height:20px;font-size:10.6px;color:#000;font-weight:400;">kein(e) Termin(e) vorhanden</div><svg style="position:absolute;left:9px;top:667px" width="10" height="9" viewBox="0 0 10 9"><rect x="0.5" y="0.5" width="9" height="8" fill="#cfe4fa" stroke="#4a80c0" stroke-width="1"/><rect x="2.5" y="4" width="5" height="1.2" fill="#000"/></svg><div class="t" style="left:24px;top:662px;height:20px;line-height:20px;font-size:10.7px;color:#000;font-weight:400;">Freitag, 8. März 2019</div><div style="left:6px;top:682px;width:307px;height:1px;background:#808080"></div><div class="t" style="left:29px;top:684px;height:20px;line-height:20px;font-size:10.6px;color:#000;font-weight:400;">kein(e) Termin(e) vorhanden</div><svg style="position:absolute;left:9px;top:708px" width="10" height="9" viewBox="0 0 10 9"><rect x="0.5" y="0.5" width="9" height="8" fill="#cfe4fa" stroke="#4a80c0" stroke-width="1"/><rect x="2.5" y="4" width="5" height="1.2" fill="#000"/></svg><div class="t" style="left:24px;top:703px;height:20px;line-height:20px;font-size:10.7px;color:#f00;font-weight:400;">Samstag, 9. März 2019</div><div style="left:6px;top:723px;width:307px;height:1px;background:#808080"></div><div class="t" style="left:29px;top:725px;height:20px;line-height:20px;font-size:10.6px;color:#000;font-weight:400;">kein(e) Termin(e) vorhanden</div><svg style="position:absolute;left:9px;top:749px" width="10" height="9" viewBox="0 0 10 9"><rect x="0.5" y="0.5" width="9" height="8" fill="#cfe4fa" stroke="#4a80c0" stroke-width="1"/><rect x="2.5" y="4" width="5" height="1.2" fill="#000"/></svg><div class="t" style="left:24px;top:744px;height:20px;line-height:20px;font-size:10.7px;color:#f00;font-weight:400;">Sonntag, 10. März 2019</div><div style="left:6px;top:764px;width:307px;height:1px;background:#808080"></div><div class="t" style="left:29px;top:766px;height:20px;line-height:20px;font-size:10.6px;color:#000;font-weight:400;">kein(e) Termin(e) vorhanden</div><div style="left:333px;top:126px;width:4px;height:892px;background:#f4f4f4"></div><div style="left:333px;top:126px;width:1px;height:892px;background:#a0a0a0"></div><div style="left:337px;top:126px;width:1px;height:892px;background:#a0a0a0"></div><div style="left:338px;top:126px;width:168px;height:892px;background:#a0a0a0"></div><div style="left:338px;top:126px;width:167px;height:26px;background:#f0f0f0"></div><svg style="position:absolute;left:345px;top:129px" width="16" height="16" viewBox="0 0 16 16"><rect x="4" y="3" width="11" height="12" fill="#fff" stroke="#3a6ab0" stroke-width="1"/><rect x="4" y="3" width="11" height="2.5" fill="#3a6ab0"/><rect x="9" y="7" width="4" height="2.5" fill="none" stroke="#3a6ab0" stroke-width=".7"/><rect x="9" y="10.5" width="4" height="2.5" fill="none" stroke="#3a6ab0" stroke-width=".7"/><path d="M6 0L1 8h4l-2 6 6-8H5z" fill="#f0c020" stroke="#a08000" stroke-width=".4"/></svg><div class="t" style="left:366px;top:128px;height:20px;line-height:20px;font-size:11px;color:#000;font-weight:400;">Filter</div><svg style="position:absolute;left:398px;top:131px" width="16" height="16" viewBox="0 0 16 16"><path d="M0.5 1h10l-3.5 4v4.5L4 8V5z" fill="#a0a0a0"/><path d="M9 5.5h5.5l-3 3h2.5l-6 7 2-5H7.5z" fill="#a0a0a0"/></svg><div class="t" style="left:419px;top:128px;height:20px;line-height:20px;font-size:11px;color:#a0a0a0;font-weight:400;">Filtern</div><div style="left:338px;top:152px;width:167px;height:19px;background:#f0f0f0;border-top:1px solid #fff;border-left:1px solid #fff;box-sizing:border-box"></div><div style="left:338px;top:170px;width:168px;height:2px;background:#696969"></div><div class="t" style="left:338px;top:152px;height:20px;line-height:20px;font-size:11px;color:#000;font-weight:400;width:167px;text-align:center;">Filter</div><svg style="position:absolute;left:349px;top:181px" width="13" height="13" viewBox="0 0 13 13"><rect x="0.5" y="0.5" width="12" height="12" fill="#fff" stroke="#3a60b0" stroke-width="1"/><rect x="0.5" y="0.5" width="12" height="3" fill="#3a70d0"/><rect x="6" y="5" width="4" height="2.5" fill="none" stroke="#3a60b0" stroke-width=".8"/><rect x="6" y="8.5" width="4" height="2.5" fill="none" stroke="#3a60b0" stroke-width=".8"/></svg><div class="t" style="left:366px;top:177px;height:20px;line-height:20px;font-size:10.6px;color:#fff;font-weight:400;">Schnellfilter</div><svg style="position:absolute;left:349px;top:207px" width="13" height="13" viewBox="0 0 13 13"><rect x="0.5" y="0.5" width="12" height="12" fill="#fff" stroke="#3a60b0" stroke-width="1"/><rect x="0.5" y="0.5" width="12" height="3" fill="#3a70d0"/><rect x="6" y="5" width="4" height="2.5" fill="none" stroke="#3a60b0" stroke-width=".8"/><rect x="6" y="8.5" width="4" height="2.5" fill="none" stroke="#3a60b0" stroke-width=".8"/></svg><div class="t" style="left:366px;top:203px;height:20px;line-height:20px;font-size:10.6px;color:#fff;font-weight:400;">Aktives DV im Jahr</div><svg style="position:absolute;left:349px;top:233px" width="13" height="13" viewBox="0 0 13 13"><rect x="0.5" y="0.5" width="12" height="12" fill="#fff" stroke="#3a60b0" stroke-width="1"/><rect x="0.5" y="0.5" width="12" height="3" fill="#3a70d0"/><rect x="6" y="5" width="4" height="2.5" fill="none" stroke="#3a60b0" stroke-width=".8"/><rect x="6" y="8.5" width="4" height="2.5" fill="none" stroke="#3a60b0" stroke-width=".8"/></svg><div class="t" style="left:366px;top:229px;height:20px;line-height:20px;font-size:10.6px;color:#fff;font-weight:400;">Aktives DV im Monat</div><svg style="position:absolute;left:349px;top:259px" width="13" height="13" viewBox="0 0 13 13"><rect x="0.5" y="0.5" width="12" height="12" fill="#fff" stroke="#3a60b0" stroke-width="1"/><rect x="0.5" y="0.5" width="12" height="3" fill="#3a70d0"/><rect x="6" y="5" width="4" height="2.5" fill="none" stroke="#3a60b0" stroke-width=".8"/><rect x="6" y="8.5" width="4" height="2.5" fill="none" stroke="#3a60b0" stroke-width=".8"/></svg><div class="t" style="left:366px;top:255px;height:20px;line-height:20px;font-size:10.6px;color:#fff;font-weight:400;">Angestellte</div><svg style="position:absolute;left:349px;top:285px" width="13" height="13" viewBox="0 0 13 13"><rect x="0.5" y="0.5" width="12" height="12" fill="#fff" stroke="#3a60b0" stroke-width="1"/><rect x="0.5" y="0.5" width="12" height="3" fill="#3a70d0"/><rect x="6" y="5" width="4" height="2.5" fill="none" stroke="#3a60b0" stroke-width=".8"/><rect x="6" y="8.5" width="4" height="2.5" fill="none" stroke="#3a60b0" stroke-width=".8"/></svg><div class="t" style="left:366px;top:281px;height:20px;line-height:20px;font-size:10.6px;color:#fff;font-weight:400;">Arbeiter</div><svg style="position:absolute;left:349px;top:311px" width="13" height="13" viewBox="0 0 13 13"><rect x="0.5" y="0.5" width="12" height="12" fill="#fff" stroke="#3a60b0" stroke-width="1"/><rect x="0.5" y="0.5" width="12" height="3" fill="#3a70d0"/><rect x="6" y="5" width="4" height="2.5" fill="none" stroke="#3a60b0" stroke-width=".8"/><rect x="6" y="8.5" width="4" height="2.5" fill="none" stroke="#3a60b0" stroke-width=".8"/></svg><div class="t" style="left:366px;top:307px;height:20px;line-height:20px;font-size:10.6px;color:#fff;font-weight:400;">freie Dienstnehmer</div><svg style="position:absolute;left:349px;top:337px" width="13" height="13" viewBox="0 0 13 13"><rect x="0.5" y="0.5" width="12" height="12" fill="#fff" stroke="#3a60b0" stroke-width="1"/><rect x="0.5" y="0.5" width="12" height="3" fill="#3a70d0"/><rect x="6" y="5" width="4" height="2.5" fill="none" stroke="#3a60b0" stroke-width=".8"/><rect x="6" y="8.5" width="4" height="2.5" fill="none" stroke="#3a60b0" stroke-width=".8"/></svg><div class="t" style="left:366px;top:333px;height:20px;line-height:20px;font-size:10.6px;color:#fff;font-weight:400;">geringfügig Besch.</div><svg style="position:absolute;left:349px;top:363px" width="13" height="13" viewBox="0 0 13 13"><rect x="0.5" y="0.5" width="12" height="12" fill="#fff" stroke="#3a60b0" stroke-width="1"/><rect x="0.5" y="0.5" width="12" height="3" fill="#3a70d0"/><rect x="6" y="5" width="4" height="2.5" fill="none" stroke="#3a60b0" stroke-width=".8"/><rect x="6" y="8.5" width="4" height="2.5" fill="none" stroke="#3a60b0" stroke-width=".8"/></svg><div class="t" style="left:366px;top:359px;height:20px;line-height:20px;font-size:10.6px;color:#fff;font-weight:400;">Lehrlinge</div><div style="left:506px;top:126px;width:4px;height:892px;background:#f4f4f4"></div><div style="left:505px;top:126px;width:1px;height:892px;background:#a0a0a0"></div><div style="left:509px;top:126px;width:1px;height:892px;background:#a0a0a0"></div><div style="left:510px;top:126px;width:1410px;height:892px;background:#fff"></div><div style="left:510px;top:126px;width:1410px;height:34px;background:#a0a0a0"></div><div style="left:515px;top:132px;width:412px;height:23px;background:#f0f0f0;border-top:1px solid #fff;border-left:1px solid #fff;box-sizing:border-box"></div><div class="t" style="left:519px;top:134px;height:20px;line-height:20px;font-size:10.6px;color:#a0a0a0;font-weight:400;">Ziehen Sie einen Spaltenkopf in diesen Bereich, um nach dieser Spalte zu gruppieren!</div><div style="left:510px;top:160px;width:1px;height:209px;background:#a0a0a0"></div><div style="left:511px;top:160px;width:1409px;height:210px;overflow:hidden"><div style="position:absolute;left:0px;top:0px;width:1409px;height:18px;background:#f0f0f0"></div><div style="position:absolute;left:0px;top:0px;width:17px;height:18px;border-top:1px solid #fff;border-left:1px solid #fff;box-sizing:border-box"></div><div style="position:absolute;left:17px;top:0px;width:53px;height:18px;border-top:1px solid #fff;border-left:1px solid #fff;box-sizing:border-box"></div><div class="t" style="position:absolute;left:17px;top:0px;height:20px;line-height:20px;font-size:10.6px;color:#000;width:53px;text-align:center">Pers-Nr.</div><div style="position:absolute;left:70px;top:0px;width:201px;height:18px;border-top:1px solid #fff;border-left:1px solid #fff;box-sizing:border-box"></div><div class="t" style="position:absolute;left:73px;top:0px;height:20px;line-height:20px;font-size:10.6px;color:#000;text-align:left">Dienstnehmer</div><div style="position:absolute;left:271px;top:0px;width:52px;height:18px;border-top:1px solid #fff;border-left:1px solid #fff;box-sizing:border-box"></div><div class="t" style="position:absolute;left:271px;top:0px;height:20px;line-height:20px;font-size:10.6px;color:#000;width:52px;text-align:center">SV-Nr.</div><div style="position:absolute;left:323px;top:0px;width:80px;height:18px;border-top:1px solid #fff;border-left:1px solid #fff;box-sizing:border-box"></div><div class="t" style="position:absolute;left:323px;top:0px;height:20px;line-height:20px;font-size:10.6px;color:#000;width:80px;text-align:center">Geburtsdatum</div><div style="position:absolute;left:403px;top:0px;width:200px;height:18px;border-top:1px solid #fff;border-left:1px solid #fff;box-sizing:border-box"></div><div class="t" style="position:absolute;left:406px;top:0px;height:20px;line-height:20px;font-size:10.6px;color:#000;text-align:left">Anschrift</div><div style="position:absolute;left:603px;top:0px;width:87px;height:18px;border-top:1px solid #fff;border-left:1px solid #fff;box-sizing:border-box"></div><div class="t" style="position:absolute;left:606px;top:0px;height:20px;line-height:20px;font-size:10.6px;color:#000;text-align:left">Telefon</div><div style="position:absolute;left:690px;top:0px;width:107px;height:18px;border-top:1px solid #fff;border-left:1px solid #fff;box-sizing:border-box"></div><div class="t" style="position:absolute;left:693px;top:0px;height:20px;line-height:20px;font-size:10.6px;color:#000;text-align:left">Berufsbezeichnung</div><div style="position:absolute;left:797px;top:0px;width:80px;height:18px;border-top:1px solid #fff;border-left:1px solid #fff;box-sizing:border-box"></div><div class="t" style="position:absolute;left:797px;top:0px;height:20px;line-height:20px;font-size:10.6px;color:#000;width:80px;text-align:center">SV-Träger</div><div style="position:absolute;left:877px;top:0px;width:80px;height:18px;border-top:1px solid #fff;border-left:1px solid #fff;box-sizing:border-box"></div><div class="t" style="position:absolute;left:877px;top:0px;height:20px;line-height:20px;font-size:10.6px;color:#000;width:80px;text-align:center">Beitragskonto</div><div style="position:absolute;left:957px;top:0px;width:80px;height:18px;border-top:1px solid #fff;border-left:1px solid #fff;box-sizing:border-box"></div><div class="t" style="position:absolute;left:960px;top:0px;height:20px;line-height:20px;font-size:10.6px;color:#000;text-align:left">Buchungsgru...</div><div style="position:absolute;left:1037px;top:0px;width:167px;height:18px;border-top:1px solid #fff;border-left:1px solid #fff;box-sizing:border-box"></div><div class="t" style="position:absolute;left:1040px;top:0px;height:20px;line-height:20px;font-size:10.6px;color:#000;text-align:left">Arbeitszeitmodell</div><div style="position:absolute;left:1204px;top:0px;width:167px;height:18px;border-top:1px solid #fff;border-left:1px solid #fff;box-sizing:border-box"></div><div class="t" style="position:absolute;left:1207px;top:0px;height:20px;line-height:20px;font-size:10.6px;color:#000;text-align:left">Dienstnehmermodell</div><div style="position:absolute;left:1371px;top:0px;width:78px;height:18px;border-top:1px solid #fff;border-left:1px solid #fff;box-sizing:border-box"></div><div class="t" style="position:absolute;left:1374px;top:0px;height:20px;line-height:20px;font-size:10.6px;color:#000;text-align:left">Arb./A</div><div style="position:absolute;left:0px;top:18px;width:1409px;height:1px;background:#a0a0a0"></div><div style="position:absolute;left:0px;top:19px;width:17px;height:18px;background:#f0f0f0;border-top:1px solid #fff;border-left:1px solid #fff;box-sizing:border-box"></div><div style="position:absolute;left:17px;top:19px;width:1392px;height:18px;background:#fff"></div><div class="t" style="position:absolute;left:18px;top:18px;height:20px;line-height:20px;font-size:10.6px;color:#000;width:53px;text-align:center">002</div><div class="t" style="position:absolute;left:73px;top:18px;height:20px;line-height:20px;font-size:10.6px;color:#000;text-align:left">Musterfrau Berta</div><div class="t" style="position:absolute;left:271px;top:18px;height:20px;line-height:20px;font-size:10.6px;color:#000;width:52px;text-align:center">9999</div><div class="t" style="position:absolute;left:323px;top:18px;height:20px;line-height:20px;font-size:10.6px;color:#000;width:80px;text-align:center">14.09.2000</div><div class="t" style="position:absolute;left:406px;top:18px;height:20px;line-height:20px;font-size:10.6px;color:#000;text-align:left">A-4910 Ried im Innkreis, Musterstraße 2</div><div class="t" style="position:absolute;left:693px;top:18px;height:20px;line-height:20px;font-size:10.6px;color:#000;text-align:left">Kaufm. Angestellter</div><div class="t" style="position:absolute;left:797px;top:18px;height:20px;line-height:20px;font-size:10.6px;color:#000;width:80px;text-align:center">ÖÖ GKK</div><div class="t" style="position:absolute;left:877px;top:18px;height:20px;line-height:20px;font-size:10.6px;color:#000;width:80px;text-align:center">999999999</div><div class="t" style="position:absolute;left:960px;top:18px;height:20px;line-height:20px;font-size:10.6px;color:#000;text-align:left">Allgemein</div><div class="t" style="position:absolute;left:1040px;top:18px;height:20px;line-height:20px;font-size:10.6px;color:#000;text-align:left">40 Std. Woche (Mo 8, Di 8, Mi 8...</div><div class="t" style="position:absolute;left:1207px;top:18px;height:20px;line-height:20px;font-size:10.6px;color:#000;text-align:left">N24 - Angestellte(r) (geringf.) (B0...</div><div class="t" style="position:absolute;left:1383px;top:18px;height:20px;line-height:20px;font-size:10.6px;color:#000;text-align:left">Angestellte(r)</div><div style="position:absolute;left:0px;top:37px;width:1409px;height:1px;background:#a0a0a0"></div><div style="position:absolute;left:0px;top:38px;width:17px;height:18px;background:#f0f0f0;border-top:1px solid #fff;border-left:1px solid #fff;box-sizing:border-box"></div><div style="position:absolute;left:17px;top:38px;width:1392px;height:18px;background:#ff8f8f"></div><div class="t" style="position:absolute;left:18px;top:37px;height:20px;line-height:20px;font-size:10.6px;color:#000;width:53px;text-align:center">004</div><div class="t" style="position:absolute;left:73px;top:37px;height:20px;line-height:20px;font-size:10.6px;color:#000;text-align:left">Musterfrau Daniela</div><div class="t" style="position:absolute;left:271px;top:37px;height:20px;line-height:20px;font-size:10.6px;color:#000;width:52px;text-align:center">9999</div><div class="t" style="position:absolute;left:323px;top:37px;height:20px;line-height:20px;font-size:10.6px;color:#000;width:80px;text-align:center">27.03.1964</div><div class="t" style="position:absolute;left:406px;top:37px;height:20px;line-height:20px;font-size:10.6px;color:#000;text-align:left">A-4910 Ried im Innkreis, Musterstraße 4</div><div class="t" style="position:absolute;left:693px;top:37px;height:20px;line-height:20px;font-size:10.6px;color:#000;text-align:left">Kaufm. Angestellter</div><div class="t" style="position:absolute;left:797px;top:37px;height:20px;line-height:20px;font-size:10.6px;color:#000;width:80px;text-align:center">ÖÖ GKK</div><div class="t" style="position:absolute;left:877px;top:37px;height:20px;line-height:20px;font-size:10.6px;color:#000;width:80px;text-align:center">999999999</div><div class="t" style="position:absolute;left:960px;top:37px;height:20px;line-height:20px;font-size:10.6px;color:#000;text-align:left">Allgemein</div><div class="t" style="position:absolute;left:1040px;top:37px;height:20px;line-height:20px;font-size:10.6px;color:#000;text-align:left">38 1/2 Std. Woche (Mo 8, Di 8, ...</div><div class="t" style="position:absolute;left:1207px;top:37px;height:20px;line-height:20px;font-size:10.6px;color:#000;text-align:left">D1 - Angestellte(r) (B002)</div><div class="t" style="position:absolute;left:1383px;top:37px;height:20px;line-height:20px;font-size:10.6px;color:#000;text-align:left">Angestellte(r)</div><div style="position:absolute;left:0px;top:56px;width:1409px;height:1px;background:#a0a0a0"></div><div style="position:absolute;left:0px;top:57px;width:17px;height:18px;background:#f0f0f0;border-top:1px solid #fff;border-left:1px solid #fff;box-sizing:border-box"></div><div style="position:absolute;left:17px;top:57px;width:1392px;height:18px;background:#fff"></div><div class="t" style="position:absolute;left:18px;top:56px;height:20px;line-height:20px;font-size:10.6px;color:#000;width:53px;text-align:center">006</div><div class="t" style="position:absolute;left:73px;top:56px;height:20px;line-height:20px;font-size:10.6px;color:#000;text-align:left">Musterfrau Frieda</div><div class="t" style="position:absolute;left:271px;top:56px;height:20px;line-height:20px;font-size:10.6px;color:#000;width:52px;text-align:center">9999</div><div class="t" style="position:absolute;left:323px;top:56px;height:20px;line-height:20px;font-size:10.6px;color:#000;width:80px;text-align:center">05.06.1973</div><div class="t" style="position:absolute;left:406px;top:56px;height:20px;line-height:20px;font-size:10.6px;color:#000;text-align:left">A-4910 Ried im Innkreis, Musterstraße 6</div><div class="t" style="position:absolute;left:693px;top:56px;height:20px;line-height:20px;font-size:10.6px;color:#000;text-align:left">Kaufm. Angestellter</div><div class="t" style="position:absolute;left:797px;top:56px;height:20px;line-height:20px;font-size:10.6px;color:#000;width:80px;text-align:center">ÖÖ GKK</div><div class="t" style="position:absolute;left:877px;top:56px;height:20px;line-height:20px;font-size:10.6px;color:#000;width:80px;text-align:center">999999999</div><div class="t" style="position:absolute;left:960px;top:56px;height:20px;line-height:20px;font-size:10.6px;color:#000;text-align:left">Allgemein</div><div class="t" style="position:absolute;left:1040px;top:56px;height:20px;line-height:20px;font-size:10.6px;color:#000;text-align:left">20 Std. Woche (Mo 4, Di 4, Mi 4...</div><div class="t" style="position:absolute;left:1207px;top:56px;height:20px;line-height:20px;font-size:10.6px;color:#000;text-align:left">N14 - Arbeiter(in) (geringf.) (B010)</div><div class="t" style="position:absolute;left:1388px;top:56px;height:20px;line-height:20px;font-size:10.6px;color:#000;text-align:left">Arbeiter(in)</div><div style="position:absolute;left:0px;top:75px;width:1409px;height:1px;background:#a0a0a0"></div><div style="position:absolute;left:0px;top:76px;width:17px;height:18px;background:#f0f0f0;border-top:1px solid #fff;border-left:1px solid #fff;box-sizing:border-box"></div><div style="position:absolute;left:17px;top:76px;width:1392px;height:18px;background:#ff8f8f"></div><div class="t" style="position:absolute;left:18px;top:75px;height:20px;line-height:20px;font-size:10.6px;color:#000;width:53px;text-align:center">008</div><div class="t" style="position:absolute;left:73px;top:75px;height:20px;line-height:20px;font-size:10.6px;color:#000;text-align:left">Musterfrau Hanna</div><div class="t" style="position:absolute;left:271px;top:75px;height:20px;line-height:20px;font-size:10.6px;color:#000;width:52px;text-align:center">9999</div><div class="t" style="position:absolute;left:323px;top:75px;height:20px;line-height:20px;font-size:10.6px;color:#000;width:80px;text-align:center">18.07.1980</div><div class="t" style="position:absolute;left:406px;top:75px;height:20px;line-height:20px;font-size:10.6px;color:#000;text-align:left">A-4910 Ried im Innkreis, Musterstraße 8</div><div class="t" style="position:absolute;left:693px;top:75px;height:20px;line-height:20px;font-size:10.6px;color:#000;text-align:left">Kaufm. Angestellter</div><div class="t" style="position:absolute;left:797px;top:75px;height:20px;line-height:20px;font-size:10.6px;color:#000;width:80px;text-align:center">ÖÖ GKK</div><div class="t" style="position:absolute;left:877px;top:75px;height:20px;line-height:20px;font-size:10.6px;color:#000;width:80px;text-align:center">999999999</div><div class="t" style="position:absolute;left:960px;top:75px;height:20px;line-height:20px;font-size:10.6px;color:#000;text-align:left">Allgemein</div><div class="t" style="position:absolute;left:1040px;top:75px;height:20px;line-height:20px;font-size:10.6px;color:#000;text-align:left">40 Std. Woche (Mo 8, Di 8, Mi 8...</div><div class="t" style="position:absolute;left:1207px;top:75px;height:20px;line-height:20px;font-size:10.6px;color:#000;text-align:left">A1 - Bauarbeiter (B001E02)</div><div class="t" style="position:absolute;left:1388px;top:75px;height:20px;line-height:20px;font-size:10.6px;color:#000;text-align:left">Arbeiter(in)</div><div style="position:absolute;left:0px;top:94px;width:1409px;height:1px;background:#a0a0a0"></div><div style="position:absolute;left:0px;top:95px;width:17px;height:18px;background:#f0f0f0;border-top:1px solid #fff;border-left:1px solid #fff;box-sizing:border-box"></div><div style="position:absolute;left:17px;top:95px;width:1392px;height:18px;background:#fff"></div><div class="t" style="position:absolute;left:18px;top:94px;height:20px;line-height:20px;font-size:10.6px;color:#000;width:53px;text-align:center">008</div><div class="t" style="position:absolute;left:73px;top:94px;height:20px;line-height:20px;font-size:10.6px;color:#000;text-align:left">Mustermann Karl</div><div class="t" style="position:absolute;left:271px;top:94px;height:20px;line-height:20px;font-size:10.6px;color:#000;width:52px;text-align:center">9999</div><div class="t" style="position:absolute;left:323px;top:94px;height:20px;line-height:20px;font-size:10.6px;color:#000;width:80px;text-align:center">01.01.1970</div><div class="t" style="position:absolute;left:406px;top:94px;height:20px;line-height:20px;font-size:10.6px;color:#000;text-align:left">A-4910 Ried im Innkreis, Musterstraße 10</div><div class="t" style="position:absolute;left:693px;top:94px;height:20px;line-height:20px;font-size:10.6px;color:#000;text-align:left">Kaufm. Angestellter</div><div class="t" style="position:absolute;left:797px;top:94px;height:20px;line-height:20px;font-size:10.6px;color:#000;width:80px;text-align:center">ÖÖ GKK</div><div class="t" style="position:absolute;left:877px;top:94px;height:20px;line-height:20px;font-size:10.6px;color:#000;width:80px;text-align:center">999999999</div><div class="t" style="position:absolute;left:960px;top:94px;height:20px;line-height:20px;font-size:10.6px;color:#000;text-align:left">Allgemein</div><div class="t" style="position:absolute;left:1040px;top:94px;height:20px;line-height:20px;font-size:10.6px;color:#000;text-align:left">38 1/2 Std. Woche (Mo 8, Di 8, ...</div><div class="t" style="position:absolute;left:1207px;top:94px;height:20px;line-height:20px;font-size:10.6px;color:#000;text-align:left">A1 - Bauarbeiter (B001E02)</div><div class="t" style="position:absolute;left:1388px;top:94px;height:20px;line-height:20px;font-size:10.6px;color:#000;text-align:left">Arbeiter(in)</div><div style="position:absolute;left:0px;top:113px;width:1409px;height:1px;background:#a0a0a0"></div><div style="position:absolute;left:0px;top:114px;width:17px;height:18px;background:#f0f0f0;border-top:1px solid #fff;border-left:1px solid #fff;box-sizing:border-box"></div><div style="position:absolute;left:17px;top:114px;width:1392px;height:18px;background:#ff8f8f"></div><div class="t" style="position:absolute;left:18px;top:113px;height:20px;line-height:20px;font-size:10.6px;color:#000;width:53px;text-align:center">009</div><div class="t" style="position:absolute;left:73px;top:113px;height:20px;line-height:20px;font-size:10.6px;color:#000;text-align:left">Mustermann Ludwig</div><div class="t" style="position:absolute;left:271px;top:113px;height:20px;line-height:20px;font-size:10.6px;color:#000;width:52px;text-align:center">9999</div><div class="t" style="position:absolute;left:323px;top:113px;height:20px;line-height:20px;font-size:10.6px;color:#000;width:80px;text-align:center">01.01.1970</div><div class="t" style="position:absolute;left:406px;top:113px;height:20px;line-height:20px;font-size:10.6px;color:#000;text-align:left">A-4910 Ried im Innkreis, Musterstraße 12</div><div class="t" style="position:absolute;left:693px;top:113px;height:20px;line-height:20px;font-size:10.6px;color:#000;text-align:left">Kaufm. Angestellter</div><div class="t" style="position:absolute;left:797px;top:113px;height:20px;line-height:20px;font-size:10.6px;color:#000;width:80px;text-align:center">ÖÖ GKK</div><div class="t" style="position:absolute;left:877px;top:113px;height:20px;line-height:20px;font-size:10.6px;color:#000;width:80px;text-align:center">999999999</div><div class="t" style="position:absolute;left:960px;top:113px;height:20px;line-height:20px;font-size:10.6px;color:#000;text-align:left">Allgemein</div><div class="t" style="position:absolute;left:1040px;top:113px;height:20px;line-height:20px;font-size:10.6px;color:#000;text-align:left">40 Std. Woche (Mo 8, Di 8, Mi 8...</div><div class="t" style="position:absolute;left:1207px;top:113px;height:20px;line-height:20px;font-size:10.6px;color:#000;text-align:left">D1 - Angestellte(r) (B002)</div><div class="t" style="position:absolute;left:1383px;top:113px;height:20px;line-height:20px;font-size:10.6px;color:#000;text-align:left">Angestellte(r)</div><div style="position:absolute;left:0px;top:132px;width:1409px;height:1px;background:#a0a0a0"></div><div style="position:absolute;left:0px;top:133px;width:17px;height:18px;background:#f0f0f0;border-top:1px solid #fff;border-left:1px solid #fff;box-sizing:border-box"></div><div style="position:absolute;left:17px;top:133px;width:1392px;height:18px;background:#fff"></div><div class="t" style="position:absolute;left:18px;top:132px;height:20px;line-height:20px;font-size:10.6px;color:#000;width:53px;text-align:center">005</div><div class="t" style="position:absolute;left:73px;top:132px;height:20px;line-height:20px;font-size:10.6px;color:#000;text-align:left">Mustermann Norbert</div><div class="t" style="position:absolute;left:271px;top:132px;height:20px;line-height:20px;font-size:10.6px;color:#000;width:52px;text-align:center">9999</div><div class="t" style="position:absolute;left:323px;top:132px;height:20px;line-height:20px;font-size:10.6px;color:#000;width:80px;text-align:center">01.01.1970</div><div class="t" style="position:absolute;left:406px;top:132px;height:20px;line-height:20px;font-size:10.6px;color:#000;text-align:left">A-4910 Ried im Innkreis, Musterstraße 14</div><div class="t" style="position:absolute;left:693px;top:132px;height:20px;line-height:20px;font-size:10.6px;color:#000;text-align:left">Kaufm. Angestellter</div><div class="t" style="position:absolute;left:797px;top:132px;height:20px;line-height:20px;font-size:10.6px;color:#000;width:80px;text-align:center">ÖÖ GKK</div><div class="t" style="position:absolute;left:877px;top:132px;height:20px;line-height:20px;font-size:10.6px;color:#000;width:80px;text-align:center">999999999</div><div class="t" style="position:absolute;left:960px;top:132px;height:20px;line-height:20px;font-size:10.6px;color:#000;text-align:left">Allgemein</div><div class="t" style="position:absolute;left:1040px;top:132px;height:20px;line-height:20px;font-size:10.6px;color:#000;text-align:left">40 Std. Woche (Mo 8, Di 8, Mi 8...</div><div class="t" style="position:absolute;left:1207px;top:132px;height:20px;line-height:20px;font-size:10.6px;color:#000;text-align:left">A1 - Bauarbeiter (B001E02)</div><div class="t" style="position:absolute;left:1388px;top:132px;height:20px;line-height:20px;font-size:10.6px;color:#000;text-align:left">Arbeiter(in)</div><div style="position:absolute;left:0px;top:151px;width:1409px;height:1px;background:#a0a0a0"></div><div style="position:absolute;left:0px;top:152px;width:17px;height:18px;background:#f0f0f0;border-top:1px solid #fff;border-left:1px solid #fff;box-sizing:border-box"></div><div style="position:absolute;left:17px;top:152px;width:1392px;height:18px;background:#ff8f8f"></div><div class="t" style="position:absolute;left:18px;top:151px;height:20px;line-height:20px;font-size:10.6px;color:#000;width:53px;text-align:center">007</div><div class="t" style="position:absolute;left:73px;top:151px;height:20px;line-height:20px;font-size:10.6px;color:#000;text-align:left">Mustermann Otto</div><div class="t" style="position:absolute;left:271px;top:151px;height:20px;line-height:20px;font-size:10.6px;color:#000;width:52px;text-align:center">9999</div><div class="t" style="position:absolute;left:323px;top:151px;height:20px;line-height:20px;font-size:10.6px;color:#000;width:80px;text-align:center">01.01.1970</div><div class="t" style="position:absolute;left:406px;top:151px;height:20px;line-height:20px;font-size:10.6px;color:#000;text-align:left">A-4910 Ried im Innkreis, Musterstraße 16</div><div class="t" style="position:absolute;left:693px;top:151px;height:20px;line-height:20px;font-size:10.6px;color:#000;text-align:left">Kaufm. Angestellter</div><div class="t" style="position:absolute;left:797px;top:151px;height:20px;line-height:20px;font-size:10.6px;color:#000;width:80px;text-align:center">ÖÖ GKK</div><div class="t" style="position:absolute;left:877px;top:151px;height:20px;line-height:20px;font-size:10.6px;color:#000;width:80px;text-align:center">999999999</div><div class="t" style="position:absolute;left:960px;top:151px;height:20px;line-height:20px;font-size:10.6px;color:#000;text-align:left">Allgemein</div><div class="t" style="position:absolute;left:1040px;top:151px;height:20px;line-height:20px;font-size:10.6px;color:#000;text-align:left">20 Std. Woche (Mo 4, Di 4, Mi 4...</div><div class="t" style="position:absolute;left:1207px;top:151px;height:20px;line-height:20px;font-size:10.6px;color:#000;text-align:left">A1 - Arbeiter(in) (B001)</div><div class="t" style="position:absolute;left:1388px;top:151px;height:20px;line-height:20px;font-size:10.6px;color:#000;text-align:left">Arbeiter(in)</div><div style="position:absolute;left:0px;top:170px;width:1409px;height:1px;background:#a0a0a0"></div><div style="position:absolute;left:0px;top:171px;width:17px;height:18px;background:#f0f0f0;border-top:1px solid #fff;border-left:1px solid #fff;box-sizing:border-box"></div><div style="position:absolute;left:17px;top:171px;width:1392px;height:18px;background:#fff"></div><div class="t" style="position:absolute;left:18px;top:170px;height:20px;line-height:20px;font-size:10.6px;color:#000;width:53px;text-align:center">003</div><div class="t" style="position:absolute;left:73px;top:170px;height:20px;line-height:20px;font-size:10.6px;color:#000;text-align:left">Mustermann Peter</div><div class="t" style="position:absolute;left:271px;top:170px;height:20px;line-height:20px;font-size:10.6px;color:#000;width:52px;text-align:center">9999</div><div class="t" style="position:absolute;left:323px;top:170px;height:20px;line-height:20px;font-size:10.6px;color:#000;width:80px;text-align:center">01.01.1970</div><div class="t" style="position:absolute;left:406px;top:170px;height:20px;line-height:20px;font-size:10.6px;color:#000;text-align:left">A-4910 Ried im Innkreis, Musterstraße 18</div><div class="t" style="position:absolute;left:693px;top:170px;height:20px;line-height:20px;font-size:10.6px;color:#000;text-align:left">Kaufm. Angestellter</div><div class="t" style="position:absolute;left:797px;top:170px;height:20px;line-height:20px;font-size:10.6px;color:#000;width:80px;text-align:center">ÖÖ GKK</div><div class="t" style="position:absolute;left:877px;top:170px;height:20px;line-height:20px;font-size:10.6px;color:#000;width:80px;text-align:center">999999999</div><div class="t" style="position:absolute;left:960px;top:170px;height:20px;line-height:20px;font-size:10.6px;color:#000;text-align:left">Allgemein</div><div class="t" style="position:absolute;left:1040px;top:170px;height:20px;line-height:20px;font-size:10.6px;color:#000;text-align:left">20 Std. Woche (Mo 4, Di 4, Mi 4...</div><div class="t" style="position:absolute;left:1207px;top:170px;height:20px;line-height:20px;font-size:10.6px;color:#000;text-align:left">M1r - Angestellte(r) (freier DV) (B...</div><div class="t" style="position:absolute;left:1383px;top:170px;height:20px;line-height:20px;font-size:10.6px;color:#000;text-align:left">Angestellte(r)</div><div style="position:absolute;left:0px;top:189px;width:1409px;height:1px;background:#a0a0a0"></div><div style="position:absolute;left:0px;top:190px;width:17px;height:18px;background:#f0f0f0;border-top:1px solid #fff;border-left:1px solid #fff;box-sizing:border-box"></div><div style="position:absolute;left:17px;top:190px;width:1392px;height:18px;background:#ff8f8f"></div><div class="t" style="position:absolute;left:18px;top:189px;height:20px;line-height:20px;font-size:10.6px;color:#000;width:53px;text-align:center">001</div><div class="t" style="position:absolute;left:73px;top:189px;height:20px;line-height:20px;font-size:10.6px;color:#000;text-align:left">Mustermann Rudolf</div><div class="t" style="position:absolute;left:271px;top:189px;height:20px;line-height:20px;font-size:10.6px;color:#000;width:52px;text-align:center">9999</div><div class="t" style="position:absolute;left:323px;top:189px;height:20px;line-height:20px;font-size:10.6px;color:#000;width:80px;text-align:center">01.01.1970</div><div class="t" style="position:absolute;left:406px;top:189px;height:20px;line-height:20px;font-size:10.6px;color:#000;text-align:left">A-4910 Ried im Innkreis, Musterstraße 20</div><div class="t" style="position:absolute;left:693px;top:189px;height:20px;line-height:20px;font-size:10.6px;color:#000;text-align:left">Kaufm. Angestellter</div><div class="t" style="position:absolute;left:797px;top:189px;height:20px;line-height:20px;font-size:10.6px;color:#000;width:80px;text-align:center">ÖÖ GKK</div><div class="t" style="position:absolute;left:877px;top:189px;height:20px;line-height:20px;font-size:10.6px;color:#000;width:80px;text-align:center">999999999</div><div class="t" style="position:absolute;left:960px;top:189px;height:20px;line-height:20px;font-size:10.6px;color:#000;text-align:left">Allgemein</div><div class="t" style="position:absolute;left:1040px;top:189px;height:20px;line-height:20px;font-size:10.6px;color:#000;text-align:left">40 Std. Woche (Mo 8, Di 8, Mi 8...</div><div class="t" style="position:absolute;left:1207px;top:189px;height:20px;line-height:20px;font-size:10.6px;color:#000;text-align:left">A1 - Arbeiter(in) (B001)</div><div class="t" style="position:absolute;left:1388px;top:189px;height:20px;line-height:20px;font-size:10.6px;color:#000;text-align:left">Arbeiter(in)</div><div style="position:absolute;left:0px;top:208px;width:1409px;height:1px;background:#a0a0a0"></div><div style="position:absolute;left:17px;top:0px;width:1px;height:209px;background:#a0a0a0"></div><div style="position:absolute;left:70px;top:0px;width:1px;height:209px;background:#a0a0a0"></div><div style="position:absolute;left:271px;top:0px;width:1px;height:209px;background:#a0a0a0"></div><div style="position:absolute;left:323px;top:0px;width:1px;height:209px;background:#a0a0a0"></div><div style="position:absolute;left:403px;top:0px;width:1px;height:209px;background:#a0a0a0"></div><div style="position:absolute;left:603px;top:0px;width:1px;height:209px;background:#a0a0a0"></div><div style="position:absolute;left:690px;top:0px;width:1px;height:209px;background:#a0a0a0"></div><div style="position:absolute;left:797px;top:0px;width:1px;height:209px;background:#a0a0a0"></div><div style="position:absolute;left:877px;top:0px;width:1px;height:209px;background:#a0a0a0"></div><div style="position:absolute;left:957px;top:0px;width:1px;height:209px;background:#a0a0a0"></div><div style="position:absolute;left:1037px;top:0px;width:1px;height:209px;background:#a0a0a0"></div><div style="position:absolute;left:1204px;top:0px;width:1px;height:209px;background:#a0a0a0"></div><div style="position:absolute;left:1371px;top:0px;width:1px;height:209px;background:#a0a0a0"></div><svg style="position:absolute;left:6px;top:22px" width="7" height="12"><path d="M0 0l6 6-6 6z" fill="#000"/></svg><div style="position:absolute;left:17px;top:18px;width:1391px;height:20px;border:1px solid #3399ff;box-sizing:border-box"></div><div style="position:absolute;left:70px;top:19px;width:1px;height:18px;background:#a0a0a0"></div><div style="position:absolute;left:271px;top:19px;width:1px;height:18px;background:#a0a0a0"></div><div style="position:absolute;left:323px;top:19px;width:1px;height:18px;background:#a0a0a0"></div><div style="position:absolute;left:403px;top:19px;width:1px;height:18px;background:#a0a0a0"></div><div style="position:absolute;left:603px;top:19px;width:1px;height:18px;background:#a0a0a0"></div><div style="position:absolute;left:690px;top:19px;width:1px;height:18px;background:#a0a0a0"></div><div style="position:absolute;left:797px;top:19px;width:1px;height:18px;background:#a0a0a0"></div><div style="position:absolute;left:877px;top:19px;width:1px;height:18px;background:#a0a0a0"></div><div style="position:absolute;left:957px;top:19px;width:1px;height:18px;background:#a0a0a0"></div><div style="position:absolute;left:1037px;top:19px;width:1px;height:18px;background:#a0a0a0"></div><div style="position:absolute;left:1204px;top:19px;width:1px;height:18px;background:#a0a0a0"></div><div style="position:absolute;left:1371px;top:19px;width:1px;height:18px;background:#a0a0a0"></div></div><div style="left:511px;top:368px;width:1409px;height:1px;background:#a0a0a0"></div><div style="left:511px;top:1002px;width:1409px;height:16px;background:#f0f0f0"></div><div style="left:528px;top:1003px;width:172px;height:14px;background:#cdcdcd"></div><svg style="position:absolute;left:516px;top:1006px" width="6" height="8" viewBox="0 0 6 8"><path d="M5 0L1 4l4 4" stroke="#606060" stroke-width="1.6" fill="none"/></svg><svg style="position:absolute;left:1907px;top:1006px" width="6" height="8" viewBox="0 0 6 8"><path d="M1 0l4 4-4 4" stroke="#606060" stroke-width="1.6" fill="none"/></svg><div style="left:0px;top:1018px;width:1920px;height:22px;background:#f0f0f0"></div><div style="left:0px;top:1021px;width:1663px;height:18px;border-top:1px solid #a0a0a0;border-left:1px solid #a0a0a0;border-bottom:1px solid #fff;border-right:1px solid #fff;box-sizing:border-box"></div><div class="t" style="left:7px;top:1021px;height:20px;line-height:20px;font-size:10.8px;color:#000;font-weight:400;">C:\Program Files (x86)\...\Datenbanken\Beispieldatenbank 2019.mdb</div><div style="left:1666px;top:1021px;width:37px;height:18px;border-top:1px solid #a0a0a0;border-left:1px solid #a0a0a0;border-bottom:1px solid #fff;border-right:1px solid #fff;box-sizing:border-box"></div><div class="t" style="left:1666px;top:1021px;height:20px;line-height:20px;font-size:10.6px;color:#808080;font-weight:400;width:37px;text-align:center;">FEST</div><div style="left:1706px;top:1021px;width:31px;height:18px;border-top:1px solid #a0a0a0;border-left:1px solid #a0a0a0;border-bottom:1px solid #fff;border-right:1px solid #fff;box-sizing:border-box"></div><div class="t" style="left:1706px;top:1021px;height:20px;line-height:20px;font-size:10.6px;color:#808080;font-weight:400;width:31px;text-align:center;">NUM</div><div style="left:1740px;top:1021px;width:45px;height:18px;border-top:1px solid #a0a0a0;border-left:1px solid #a0a0a0;border-bottom:1px solid #fff;border-right:1px solid #fff;box-sizing:border-box"></div><div class="t" style="left:1740px;top:1021px;height:20px;line-height:20px;font-size:10.6px;color:#000;font-weight:400;width:45px;text-align:center;">KW 10</div><div style="left:1788px;top:1021px;width:71px;height:18px;border-top:1px solid #a0a0a0;border-left:1px solid #a0a0a0;border-bottom:1px solid #fff;border-right:1px solid #fff;box-sizing:border-box"></div><div class="t" style="left:1788px;top:1021px;height:20px;line-height:20px;font-size:10.6px;color:#000;font-weight:400;width:71px;text-align:center;">08.03.2019</div><div style="left:1862px;top:1021px;width:38px;height:18px;border-top:1px solid #a0a0a0;border-left:1px solid #a0a0a0;border-bottom:1px solid #fff;border-right:1px solid #fff;box-sizing:border-box"></div><div class="t" style="left:1862px;top:1021px;height:20px;line-height:20px;font-size:10.6px;color:#000;font-weight:400;width:38px;text-align:center;">11:36</div><div style="left:0px;top:1040px;width:1920px;height:40px;background:#05070b"></div><svg style="position:absolute;left:16px;top:1052px" width="17" height="17" viewBox="0 0 17 17"><path d="M0 2.3l6.8-.9v6.6H0zM7.7 1.3L16.8 0v8H7.7zM0 8.9h6.8v6.6L0 14.6zM7.7 8.9h9.1V17l-9.1-1.3z" fill="#fff"/></svg><svg style="position:absolute;left:63px;top:1051px" width="18" height="18" viewBox="0 0 18 18"><circle cx="11" cy="7" r="5.3" stroke="#fff" stroke-width="1.3" fill="none"/><path d="M7.2 10.8L1 17" stroke="#fff" stroke-width="1.5"/></svg><svg style="position:absolute;left:109px;top:1052px" width="22" height="16" viewBox="0 0 22 16"><rect x="4" y="1" width="14" height="14" stroke="#fff" stroke-width="1.3" fill="none"/><path d="M2 3H.7v10H2M20 3h1.3v10H20" stroke="#fff" stroke-width="1.1" fill="none"/></svg><svg style="position:absolute;left:159px;top:1048px" width="22" height="24" viewBox="0 0 22 24"><path d="M2 13q0-10 9-11 9 0 9 10H7q0 5 5 6 4 0 7-2v5q-3 2-8 2-9-1-9-10z" fill="#1a73d8"/><path d="M7 9h8q-1-3-4-3t-4 3z" fill="#05070b"/></svg><svg style="position:absolute;left:207px;top:1050px" width="22" height="20" viewBox="0 0 22 20"><path d="M1 2h7l2 2h11v15H1z" fill="#f5c84a"/><rect x="1" y="6" width="20" height="13" fill="#ffe08a"/><path d="M6 19v-6h10v6h-3v-3h-4v3z" fill="#2d8ee0"/></svg><svg style="position:absolute;left:256px;top:1047px" width="22" height="26" viewBox="0 0 22 26"><path d="M7 7q0-5 4-5t4 5" stroke="#fff" stroke-width="1.4" fill="none"/><path d="M1 7h20v18H1z" fill="#fff"/><path d="M6 12h4.5v4.5H6zM11.5 12H16v4.5h-4.5zM6 17.5h4.5V22H6zM11.5 17.5H16V22h-4.5z" fill="#05070b"/></svg><svg style="position:absolute;left:305px;top:1048px" width="24" height="24" viewBox="0 0 16 16"><defs><linearGradient id="ag2" x1="0" y1="0" x2="0" y2="1"><stop offset="0" stop-color="#e4a090"/><stop offset=".45" stop-color="#d86a60"/><stop offset=".55" stop-color="#a05050"/><stop offset="1" stop-color="#8a0000"/></linearGradient></defs><path d="M.5 .5h10.5l4.5 4.5v10.5H.5z" fill="url(#ag2)" stroke="#a03030" stroke-width="1"/><path d="M4 4v9h5" stroke="#fbe0d0" stroke-width="3" fill="none"/><path d="M4 4v9h5" stroke="#900000" stroke-width="1.6" fill="none"/><circle cx="11.5" cy="11.5" r="3.2" fill="#f0c000"/><path d="M11.5 9.5v4" stroke="#fff6c0" stroke-width="1"/></svg><div style="left:297px;top:1078px;width:40px;height:2px;background:#8ab8f0"></div><svg style="position:absolute;left:1713px;top:1055px" width="14" height="9" viewBox="0 0 14 9"><path d="M1 8l6-6 6 6" stroke="#fff" stroke-width="1.2" fill="none"/></svg><svg style="position:absolute;left:1735px;top:1052px" width="17" height="16" viewBox="0 0 17 16"><path d="M1 5h3l5-4v14l-5-4H1z" stroke="#fff" stroke-width="1.1" fill="none"/><path d="M11 5q2 3 0 6M13 3q3.5 5 0 10M15 1.5q4.5 6.5 0 13" stroke="#fff" stroke-width="1" fill="none"/></svg><svg style="position:absolute;left:1759px;top:1052px" width="18" height="16" viewBox="0 0 18 16"><rect x="4" y="2" width="13" height="9" stroke="#fff" stroke-width="1.1" fill="none"/><path d="M7 14h7M10.5 11v3" stroke="#fff" stroke-width="1.1"/><rect x="1" y="1" width="4" height="4" stroke="#fff" stroke-width="1" fill="#05070b"/><path d="M2 3v9" stroke="#fff" stroke-width="1"/></svg><svg style="position:absolute;left:1783px;top:1051px" width="18" height="18" viewBox="0 0 18 18"><path d="M1 1h16v12h-6l-2 3-2-3H1z" stroke="#fff" stroke-width="1.1" fill="none"/><path d="M4 5h10M4 7.5h10M4 10h7" stroke="#fff" stroke-width="1"/></svg><div class="t" style="left:1811px;top:1050px;height:20px;line-height:20px;font-size:11px;color:#fff;font-weight:400;">DEU</div><div class="t" style="left:1850px;top:1041px;height:20px;line-height:20px;font-size:11.5px;color:#fff;font-weight:400;width:42px;text-align:center;">11:36</div><div class="t" style="left:1850px;top:1057px;height:20px;line-height:20px;font-size:10.8px;color:#fff;font-weight:400;">08.03.2019</div><div style="left:1915px;top:1040px;width:1px;height:40px;background:#333"></div><div style="left:553px;top:242px;width:814px;height:549px;background:#f0f0f0;box-shadow:0 4px 18px 4px rgba(0,0,0,.28)"></div><div style="left:553px;top:242px;width:814px;height:549px;border:1px solid #1883d7;box-sizing:border-box;z-index:5"></div><div style="left:554px;top:243px;width:812px;height:30px;background:#fff"></div><svg style="position:absolute;left:562px;top:249px" width="16" height="16" viewBox="0 0 16 16"><rect x=".5" y=".5" width="15" height="15" fill="#fdf0f0" stroke="#e88080" stroke-width="1"/><path d="M3 5l6-3 5 8-6 4z" fill="#fff" stroke="#e07070" stroke-width=".8"/></svg><div class="t" style="left:586px;top:248px;height:20px;line-height:20px;font-size:12px;color:#000;font-weight:400;">Abgabenverrechnung</div><div style="left:1247px;top:257px;width:10px;height:1px;background:#c8c8c8"></div><div style="left:1292px;top:252px;width:10px;height:10px;border:1px solid #000;box-sizing:border-box"></div><svg style="position:absolute;left:1337px;top:251px" width="12" height="12" viewBox="0 0 12 12"><path d="M1 1l10 10M11 1L1 11" stroke="#000" stroke-width="1"/></svg><div style="left:554px;top:273px;width:812px;height:25px;background:#f0f0f0"></div><svg style="position:absolute;left:559px;top:277px" width="16" height="16" viewBox="0 0 16 16"><g shape-rendering="crispEdges" fill="#000"><rect x="0" y="0" width="3" height="1"/><rect x="0" y="0" width="1" height="5"/><rect x="0" y="2" width="3" height="1"/><rect x="0" y="4" width="3" height="1"/><rect x="0" y="6" width="1" height="1"/><rect x="2" y="6" width="1" height="1"/><rect x="1" y="7" width="1" height="1"/><rect x="0" y="8" width="1" height="1"/><rect x="2" y="8" width="1" height="1"/><rect x="1" y="10" width="1" height="2"/><rect x="0" y="13" width="3" height="1"/><rect x="1" y="13" width="1" height="3"/><rect x="4" y="6" width="1" height="9"/><rect x="4" y="14" width="12" height="2"/><rect x="14" y="5" width="1" height="10"/></g><rect x="5" y="5" width="9" height="9" fill="#5ac85a"/><path d="M5 5h7L5 12z" fill="#8ad88a"/><rect x="3.5" y="0" width="4.5" height="5" fill="#f8c040"/><circle cx="5.7" cy="2.5" r="1.3" fill="#fff8c0"/></svg><div style="left:582px;top:275px;width:1px;height:20px;background:#c8c8c8"></div><svg style="position:absolute;left:590px;top:277px" width="16" height="16" viewBox="0 0 16 16"><rect x="3" y="1" width="10" height="14" rx="1.5" fill="#7aa6e8" stroke="#4a70b0" stroke-width=".8"/><rect x="4.5" y="2.5" width="7" height="3" fill="#dfeaff"/><path d="M5 8h1.5M7.5 8H9M10 8h1M5 10.5h1.5M7.5 10.5H9M10 10.5h1M5 13h1.5M7.5 13H9" stroke="#fff" stroke-width="1.2"/><rect x="10" y="10" width="1.5" height="1.5" fill="#f08030"/></svg><div class="t" style="left:612px;top:275px;height:20px;line-height:20px;font-size:11px;color:#000;font-weight:400;letter-spacing:-0.05px">Abgaben neu be<u>r</u>echnen</div><svg style="position:absolute;left:742px;top:279px" width="14" height="14" viewBox="0 0 14 14"><path d="M1.5 1.5l11 11M12.5 1.5l-11 11" stroke="#d02020" stroke-width="2"/></svg><div class="t" style="left:762px;top:275px;height:20px;line-height:20px;font-size:11px;color:#000;font-weight:400;letter-spacing:-0.05px">Zahlungen <u>l</u>öschen</div><div style="left:862px;top:275px;width:1px;height:20px;background:#c8c8c8"></div><svg style="position:absolute;left:870px;top:277px" width="16" height="16" viewBox="0 0 16 16"><g shape-rendering="crispEdges"><rect x="0.5" y="0.5" width="7" height="12" fill="#c8dcf8" stroke="#5a7ab0" stroke-width="1"/><rect x="8.5" y="0.5" width="7" height="12" fill="#c8dcf8" stroke="#5a7ab0" stroke-width="1"/></g><text x="2" y="7" font-size="7" font-weight="700" fill="#1a50d0" font-family="Liberation Sans">1</text><text x="10" y="7" font-size="7" font-weight="700" fill="#1a50d0" font-family="Liberation Sans">2</text><path d="M5.5 8.5h3l2 2v3l-2 2h-3l-2-2v-3z" fill="#fff" stroke="#e00000" stroke-width="1.6"/><path d="M7 10.5v2h1.5" stroke="#000" stroke-width=".9" fill="none"/></svg><svg style="position:absolute;left:891px;top:277px" width="16" height="16" viewBox="0 0 16 16"><g shape-rendering="crispEdges"><rect x="1" y="1.5" width="14" height="11" fill="#fff" stroke="#707070" stroke-width="1.4"/><path d="M3 4.5h4M9 4.5h5M3 7h4M9 7h5M3 9.5h4M9 9.5h5" stroke="#666" stroke-width="1"/></g><text x="8" y="16.3" text-anchor="middle" font-size="10.5" font-weight="700" fill="#18a018" stroke="#18a018" stroke-width=".3" font-family="Liberation Sans" letter-spacing="-.9">BN</text></svg><svg style="position:absolute;left:913px;top:277px" width="16" height="16" viewBox="0 0 16 16"><g shape-rendering="crispEdges"><rect x="1" y="1.5" width="14" height="11" fill="#fff" stroke="#707070" stroke-width="1.4"/><path d="M3 4.5h4M9 4.5h5M3 7h4M9 7h5M3 9.5h4M9 9.5h5" stroke="#666" stroke-width="1"/></g><text x="8" y="16.3" text-anchor="middle" font-size="10.5" font-weight="700" fill="#333" stroke="#333" stroke-width=".3" font-family="Liberation Sans" letter-spacing="-.9">BV</text></svg><div style="left:936px;top:275px;width:1px;height:20px;background:#c8c8c8"></div><svg style="position:absolute;left:943px;top:277px" width="16" height="16" viewBox="0 0 16 16"><rect x="0.5" y="3.5" width="11" height="8" fill="#fff" stroke="#3a5aa0" stroke-width="1"/><rect x="1" y="4" width="10" height="2" fill="#6a9ae8"/><path d="M2 8h3M6 8h4M2 10h3M6 10h4" stroke="#8aa0c8" stroke-width=".8"/><path d="M8 4l2-3h5l.5 3z" fill="#e8eef8" stroke="#4a6aa8" stroke-width=".8"/><rect x="6.5" y="4" width="9" height="5" fill="#b8c8e0" stroke="#4a6aa8" stroke-width=".8"/><rect x="7.5" y="6" width="6" height="1.5" fill="#fff"/></svg><svg style="position:absolute;left:965px;top:284px" width="6" height="4" viewBox="0 0 6 4"><path d="M0 0h6L3 3z" fill="#000"/></svg><svg style="position:absolute;left:976px;top:277px" width="16" height="16" viewBox="0 0 16 16"><path d="M4 6l2-4h6l1 4z" fill="#eef2fa" stroke="#5a7ab0" stroke-width=".8"/><path d="M7 3.5h4M6.5 5h4" stroke="#7a9ad0" stroke-width=".8"/><path d="M.5 9.5l2-3h6v9h-8z" fill="#fff" stroke="#5a7ab0" stroke-width=".8"/><rect x="1" y="13" width="6" height="2" fill="#7a9ad0"/><text x="6.5" y="15.5" font-size="9" font-weight="700" fill="#000080" font-family="Liberation Sans" transform="scale(.9,1)" letter-spacing="-.6">AL</text></svg><svg style="position:absolute;left:998px;top:277px" width="16" height="16" viewBox="0 0 16 16"><path d="M4 6l2-4h6l1 4z" fill="#eef2fa" stroke="#5a7ab0" stroke-width=".8"/><path d="M7 3.5h4M6.5 5h4" stroke="#7a9ad0" stroke-width=".8"/><path d="M.5 9.5l2-3h6v9h-8z" fill="#fff" stroke="#5a7ab0" stroke-width=".8"/><rect x="1" y="13" width="6" height="2" fill="#7a9ad0"/><text x="6.5" y="15.5" font-size="9" font-weight="700" fill="#000080" font-family="Liberation Sans" transform="scale(.9,1)" letter-spacing="-.6">BL</text></svg><svg style="position:absolute;left:1020px;top:277px" width="16" height="16" viewBox="0 0 16 16"><rect x="0.5" y="4.5" width="11" height="11" fill="#fff" stroke="#808080" stroke-width="1"/><path d="M2 11h3M6 11h4M2 13h3M6 13h4" stroke="#999" stroke-width=".8"/><path d="M2 9l5-5h6l1 2-5 4z" fill="#f0c898" stroke="#503010" stroke-width=".7"/><rect x="14" y="1" width="2" height="6" fill="#1060e0"/></svg><div style="left:1043px;top:275px;width:1px;height:20px;background:#c8c8c8"></div><svg style="position:absolute;left:1052px;top:277px" width="16" height="16" viewBox="0 0 16 16"><path d="M1 10l7-7 7 4-7 7z" fill="#a050c8" stroke="#5a2080" stroke-width=".8"/><path d="M1 10v2l7 4v-2z" fill="#eee" stroke="#5a2080" stroke-width=".6"/><path d="M8 14v2l7-7V7z" fill="#7a3aa0"/><text x="6" y="11" font-size="7" font-weight="700" fill="#ffd030" font-family="Liberation Sans" transform="rotate(-10 8 8)">?</text></svg><div class="t" style="left:1073px;top:275px;height:20px;line-height:20px;font-size:11px;color:#000;font-weight:400;"><u>H</u>ilfe</div><div class="t" style="left:1232px;top:275px;height:20px;line-height:20px;font-size:11px;color:#000;font-weight:400;">Anzeige - Detailfenster</div><svg style="position:absolute;left:1354px;top:282px" width="7" height="4" viewBox="0 0 7 4"><path d="M0 0h7L3.5 4z" fill="#000"/></svg><div style="left:554px;top:298px;width:812px;height:27px;background:#f0f0f0"></div><div class="t" style="left:561px;top:301px;height:20px;line-height:20px;font-size:11px;color:#000;font-weight:400;">Abgaben aus dem Jahr:</div><div style="left:683px;top:302px;width:53px;height:18px;background:#fff"></div><div style="left:722px;top:302px;width:14px;height:18px;background:#f0f0f0;border:1px solid #fff;box-sizing:border-box"></div><svg style="position:absolute;left:725px;top:308px" width="8" height="5" viewBox="0 0 8 5"><path d="M0 0h7L3.5 4z" fill="#000"/></svg><div class="t" style="left:685px;top:300px;height:20px;line-height:20px;font-size:11px;color:#000;font-weight:400;">2019</div><div class="t" style="left:743px;top:301px;height:20px;line-height:20px;font-size:11px;color:#000;font-weight:400;">... aus dem Monat:</div><div style="left:838px;top:302px;width:72px;height:18px;background:#fff"></div><div style="left:896px;top:302px;width:14px;height:18px;background:#f0f0f0;border:1px solid #fff;box-sizing:border-box"></div><svg style="position:absolute;left:899px;top:308px" width="8" height="5" viewBox="0 0 8 5"><path d="M0 0h7L3.5 4z" fill="#000"/></svg><div class="t" style="left:840px;top:300px;height:20px;line-height:20px;font-size:11px;color:#000;font-weight:400;">&lt; Alle &gt;</div><div style="left:917px;top:301px;width:1px;height:21px;background:#c8c8c8"></div><div style="left:928px;top:304px;width:12px;height:12px;background:linear-gradient(to right,#c8e4fa,#e6f2fd);border:1px solid #7a8a9a;box-sizing:border-box"></div><div class="t" style="left:947px;top:301px;height:20px;line-height:20px;font-size:11px;color:#000;font-weight:400;letter-spacing:-0.05px">Alle offenen Monate anzeigen</div><div style="left:1100px;top:301px;width:1px;height:21px;background:#c8c8c8"></div><svg style="position:absolute;left:1107px;top:302px" width="17" height="16" viewBox="0 0 17 16"><path d="M8.5 1L16 15H1z" fill="#ffe000" stroke="#806000" stroke-width="1"/><path d="M8.5 5v6" stroke="#000" stroke-width="1.8"/><circle cx="8.5" cy="13" r="1" fill="#000"/></svg><div class="t" style="left:1129px;top:301px;height:20px;line-height:20px;font-size:11px;color:#000;font-weight:400;">Abgaben über<u>w</u>eisen</div><svg style="position:absolute;left:1356px;top:302px" width="9" height="7" viewBox="0 0 9 7"><path d="M.7 .5l3 3-3 3M4.7 .5l3 3-3 3" stroke="#000" stroke-width="1.1" fill="none"/></svg><div style="left:554px;top:325px;width:149px;height:465px;background:#a0a0a0"></div><div style="left:554px;top:325px;width:149px;height:18px;background:#f0f0f0;border-top:1px solid #fff;border-left:1px solid #fff;box-sizing:border-box"></div><div style="left:554px;top:343px;width:149px;height:2px;background:#696969"></div><div class="t" style="left:554px;top:325px;height:20px;line-height:20px;font-size:11px;color:#000;font-weight:400;width:149px;text-align:center;">Abgaben</div><div style="left:703px;top:325px;width:2px;height:465px;background:#f0f0f0"></div><div style="left:610px;top:350px;width:36px;height:36px;border-top:1px solid #808080;border-left:1px solid #808080;border-bottom:1px solid #c8c8c8;border-right:1px solid #c8c8c8;box-sizing:border-box;background:#a8a8a8"></div><svg style="position:absolute;left:612px;top:352px" width="32" height="32" viewBox="0 0 32 32"><path d="M7 26q0-7 9-7t9 7v2H7z" fill="#2a5ad0" stroke="#1a3a90" stroke-width="1"/><path d="M13 19l3 5 3-5z" fill="#a8d0f8"/><rect x="14" y="16" width="5" height="4" fill="#b01010"/><circle cx="15" cy="10" r="7" fill="#1a1a1a"/><ellipse cx="17.5" cy="12.5" rx="5" ry="5.5" fill="#e07010"/><ellipse cx="18.5" cy="11" rx="2.5" ry="2" fill="#f0a040"/></svg><div class="t" style="left:554px;top:385px;height:20px;line-height:20px;font-size:10.5px;color:#fff;font-weight:400;width:149px;text-align:center;">Gesamt</div><svg style="position:absolute;left:612px;top:409px" width="32" height="32" viewBox="0 0 32 32"><rect width="32" height="32" fill="#66cc77"/><path d="M16 2C11 9 5 16 5 22a11 9 0 0 0 22 0C27 16 21 9 16 2z" fill="none" stroke="#fff" stroke-width="2"/><path d="M16 3v27" stroke="#fff" stroke-width="1.6"/><path d="M14 16q-6-1-6 3t5 4q2 1 0 4l-4-1" stroke="#fff" stroke-width="2.2" fill="none"/><path d="M18 15l3 11 3-10" stroke="#fff" stroke-width="2.2" fill="none"/></svg><div class="t" style="left:554px;top:442px;height:20px;line-height:20px;font-size:10.5px;color:#fff;font-weight:400;width:149px;text-align:center;">SV-Träger</div><svg style="position:absolute;left:612px;top:466px" width="32" height="32" viewBox="0 0 32 32"><path d="M2 7L16 1l14 6z" fill="#d8d8d8" stroke="#000" stroke-width="1.3"/><rect x="2" y="7" width="28" height="24" fill="#fff" stroke="#000" stroke-width="1.4"/><rect x="4.5" y="10" width="3" height="3" fill="#ffff00" stroke="#000" stroke-width="1"/><rect x="4.5" y="15" width="3" height="3" fill="#ffff00" stroke="#000" stroke-width="1"/><rect x="9.7" y="10" width="3" height="3" fill="#ffff00" stroke="#000" stroke-width="1"/><rect x="9.7" y="15" width="3" height="3" fill="#ffff00" stroke="#000" stroke-width="1"/><rect x="14.9" y="10" width="3" height="3" fill="#ffff00" stroke="#000" stroke-width="1"/><rect x="14.9" y="15" width="3" height="3" fill="#ffff00" stroke="#000" stroke-width="1"/><rect x="20.1" y="10" width="3" height="3" fill="#ffff00" stroke="#000" stroke-width="1"/><rect x="20.1" y="15" width="3" height="3" fill="#ffff00" stroke="#000" stroke-width="1"/><rect x="25.3" y="10" width="3" height="3" fill="#ffff00" stroke="#000" stroke-width="1"/><rect x="25.3" y="15" width="3" height="3" fill="#ffff00" stroke="#000" stroke-width="1"/><path d="M6 19v9M11.2 19v9M21.6 19v9M26.8 19v9" stroke="#999" stroke-width="2"/><rect x="14.5" y="22" width="3.5" height="4" fill="#000"/><path d="M2 27.5h28M2 30h28" stroke="#000" stroke-width="1"/></svg><div class="t" style="left:554px;top:499px;height:20px;line-height:20px;font-size:10.5px;color:#fff;font-weight:400;width:149px;text-align:center;">Finanzamt</div><svg style="position:absolute;left:612px;top:523px" width="32" height="32" viewBox="0 0 32 32"><path d="M5 13l16-4 8 8v10l-8 4-16-4z" fill="#f4f4f4" stroke="#888" stroke-width=".6"/><path d="M21 13l8 5v9l-8 4z" fill="#c8c8d0"/><path d="M1 12L15 2l8 3 8 12-3 1-7-9-16 5z" fill="#2a6ad8" stroke="#1a4aa0" stroke-width="1"/><rect x="6" y="1" width="4" height="6" fill="#eee" stroke="#aaa" stroke-width=".5"/><rect x="13" y="17" width="7" height="11" fill="#b85a20" stroke="#6a3010" stroke-width=".6"/><path d="M14 14a2.5 2 0 0 1 5 0z" fill="#cfe0f8" stroke="#555" stroke-width=".5"/><rect x="8" y="17" width="3" height="3" fill="#f0c060"/><ellipse cx="7" cy="28" rx="3" ry="2" fill="#2a9a20"/><ellipse cx="24" cy="26" rx="3" ry="2" fill="#2a9a20"/></svg><div class="t" style="left:554px;top:556px;height:20px;line-height:20px;font-size:10.5px;color:#fff;font-weight:400;width:149px;text-align:center;">Gemeinde(n)</div><svg style="position:absolute;left:612px;top:580px" width="32" height="32" viewBox="0 0 32 32"><path d="M2 26q0-7 6-7t6 7v1H2z" fill="#e04a20" stroke="#902a10" stroke-width=".8"/><circle cx="9" cy="12" r="6" fill="#f0b040" stroke="#c08020" stroke-width=".8"/><path d="M18 24q0-7 6-7t6 7v2H18z" fill="#2a60d0" stroke="#1a3a90" stroke-width=".8"/><circle cx="22" cy="8" r="6" fill="#111"/><ellipse cx="22.5" cy="10.5" rx="4" ry="4" fill="#d89030"/><path d="M8 31q0-8 8-8t8 8z" fill="#3aa040" stroke="#206020" stroke-width=".8"/><path d="M14 23l2 3 2-3z" fill="#fff"/><circle cx="16" cy="17" r="6" fill="#f0c070" stroke="#a06020" stroke-width=".8"/><path d="M10 16q0-7 6-7t6 7q-3-3-6-3t-6 3z" fill="#b07020"/></svg><div class="t" style="left:554px;top:613px;height:20px;line-height:20px;font-size:10.5px;color:#fff;font-weight:400;width:149px;text-align:center;">Dienstnehmer(innen)</div><svg style="position:absolute;left:614px;top:639px" width="28" height="28" viewBox="0 0 28 28"><rect x="1" y="1" width="26" height="26" fill="#dce8f8" stroke="#1a3a8a" stroke-width="2"/><path d="M2 2h24L2 26z" fill="#eef4fc"/><circle cx="10" cy="11" r="3.5" fill="#222"/><circle cx="10.5" cy="12" r="2.6" fill="#c06020"/><path d="M6 19q0-4 4-4t4 4z" fill="#3a60c0"/><circle cx="18" cy="10" r="3.5" fill="#f0b040"/><path d="M14 17q0-4 4-4t4 4z" fill="#40a040"/><rect x="13" y="16" width="11" height="8" fill="#f0c868" stroke="#222" stroke-width="1"/></svg><div class="t" style="left:554px;top:670px;height:20px;line-height:20px;font-size:10.5px;color:#fff;font-weight:400;width:149px;text-align:center;">Sonstiges</div><div style="left:704px;top:325px;width:662px;height:29px;background:linear-gradient(to right,#880808 0%,#8c2a2a 10%,#995050 22%,#ae7676 35%,#c69c9c 50%,#d8b8b8 65%,#e8d0d0 80%,#f6e2e2 92%,#fdeaea 100%)"></div><div class="t" style="left:722px;top:331px;height:20px;line-height:20px;font-size:19.6px;color:#fff;font-weight:700;">Abgabenverrechnung Gesamt</div><div style="left:705px;top:354px;width:661px;height:27px;background:#f0f0f0"></div><div style="left:706px;top:360px;width:3px;height:1px;background:#a0a0a0"></div><div style="left:706px;top:362px;width:3px;height:1px;background:#a0a0a0"></div><div style="left:706px;top:364px;width:3px;height:1px;background:#a0a0a0"></div><div style="left:706px;top:366px;width:3px;height:1px;background:#a0a0a0"></div><div style="left:706px;top:368px;width:3px;height:1px;background:#a0a0a0"></div><div style="left:706px;top:370px;width:3px;height:1px;background:#a0a0a0"></div><div style="left:706px;top:372px;width:3px;height:1px;background:#a0a0a0"></div><div style="left:706px;top:374px;width:3px;height:1px;background:#a0a0a0"></div><div style="left:718px;top:360px;width:15px;height:14px;background:#d8e8f8;border:1px solid #6a88b0;box-sizing:border-box"></div><svg style="position:absolute;left:720px;top:362px" width="11" height="10" viewBox="0 0 11 10"><path d="M5.5 1v8M1.5 5h8" stroke="#e03030" stroke-width="1.8"/></svg><div style="left:740px;top:360px;width:15px;height:14px;background:#d8e8f8;border:1px solid #6a88b0;box-sizing:border-box"></div><svg style="position:absolute;left:742px;top:362px" width="11" height="10" viewBox="0 0 11 10"><path d="M1.5 5h8" stroke="#e03030" stroke-width="1.8"/></svg><div style="left:762px;top:357px;width:1px;height:21px;background:#c8c8c8"></div><div class="t" style="left:771px;top:357px;height:20px;line-height:20px;font-size:11px;color:#000;font-weight:400;">Abgabenverrechnung gruppiert nach:</div><div style="left:960px;top:357px;width:147px;height:19px;background:#fff"></div><div style="left:1092px;top:357px;width:15px;height:19px;background:#f0f0f0;border:1px solid #fff;box-sizing:border-box"></div><svg style="position:absolute;left:1096px;top:364px" width="8" height="5" viewBox="0 0 8 5"><path d="M0 0h7L3.5 4z" fill="#000"/></svg><div class="t" style="left:962px;top:356px;height:20px;line-height:20px;font-size:11px;color:#000;font-weight:400;">Abrechnungszeitraum</div><div style="left:1111px;top:357px;width:133px;height:20px;background:#e5f1fb;border:1px solid #0078d7;box-sizing:border-box"></div><div style="left:1117px;top:361px;width:13px;height:13px;background:linear-gradient(to right,#c8e4fa,#e6f2fd);border:1px solid #7a8a9a;box-sizing:border-box"></div><div class="t" style="left:1136px;top:357px;height:20px;line-height:20px;font-size:11px;color:#000;font-weight:400;">Nullwerte ausblenden</div><svg style="position:absolute;left:1248px;top:360px" width="16" height="16" viewBox="0 0 16 16"><rect x="0.5" y="3.5" width="11" height="8" fill="#fff" stroke="#3a5aa0" stroke-width="1"/><rect x="1" y="4" width="10" height="2" fill="#6a9ae8"/><path d="M2 8h3M6 8h4M2 10h3M6 10h4" stroke="#8aa0c8" stroke-width=".8"/><path d="M8 4l2-3h5l.5 3z" fill="#e8eef8" stroke="#4a6aa8" stroke-width=".8"/><rect x="6.5" y="4" width="9" height="5" fill="#b8c8e0" stroke="#4a6aa8" stroke-width=".8"/><rect x="7.5" y="6" width="6" height="1.5" fill="#fff"/></svg><svg style="position:absolute;left:1269px;top:365px" width="7" height="4" viewBox="0 0 7 4"><path d="M0 0h7L3.5 4z" fill="#000"/></svg><div style="left:705px;top:381px;width:645px;height:362px;background:#f0f0f0;border-top:1px solid #a0a0a0;border-left:1px solid #a0a0a0;box-sizing:border-box"></div><div style="left:706px;top:382px;width:644px;height:18px;background:#f0f0f0"></div><div style="left:706px;top:382px;width:67px;height:19px;border-top:1px solid #fff;border-left:1px solid #fff;border-right:1px solid #a0a0a0;border-bottom:1px solid #a0a0a0;box-sizing:border-box"></div><div style="left:773px;top:382px;width:323px;height:19px;border-top:1px solid #fff;border-left:1px solid #fff;border-right:1px solid #a0a0a0;border-bottom:1px solid #a0a0a0;box-sizing:border-box"></div><div style="left:1096px;top:382px;width:113px;height:19px;border-top:1px solid #fff;border-left:1px solid #fff;border-right:1px solid #a0a0a0;border-bottom:1px solid #a0a0a0;box-sizing:border-box"></div><div class="t" style="left:1096px;top:382px;height:20px;line-height:20px;font-size:10.6px;color:#000;font-weight:400;width:113px;text-align:center;">Abgabenschuld</div><div style="left:1209px;top:382px;width:120px;height:19px;border-top:1px solid #fff;border-left:1px solid #fff;border-right:1px solid #a0a0a0;border-bottom:1px solid #a0a0a0;box-sizing:border-box"></div><div class="t" style="left:1209px;top:382px;height:20px;line-height:20px;font-size:10.6px;color:#000;font-weight:400;width:120px;text-align:center;">Restschuld</div><div style="left:1329px;top:382px;width:21px;height:19px;border-top:1px solid #fff;border-left:1px solid #fff;border-right:1px solid #a0a0a0;border-bottom:1px solid #a0a0a0;box-sizing:border-box"></div><div style="left:1350px;top:382px;width:16px;height:361px;background:#f0f0f0"></div><div style="left:1351px;top:400px;width:14px;height:298px;background:#cdcdcd"></div><svg style="position:absolute;left:1353px;top:387px" width="10" height="6" viewBox="0 0 10 6"><path d="M1 5l4-4 4 4" stroke="#606060" stroke-width="1.5" fill="none"/></svg><svg style="position:absolute;left:1353px;top:730px" width="10" height="6" viewBox="0 0 10 6"><path d="M1 1l4 4 4-4" stroke="#606060" stroke-width="1.5" fill="none"/></svg><div style="left:708px;top:404px;width:12px;height:12px;background:#f0f0f0;border-top:1px solid #fff;border-left:1px solid #fff;border-bottom:1px solid #a0a0a0;border-right:1px solid #a0a0a0;box-sizing:border-box"></div><div style="left:711px;top:409px;width:6px;height:1px;background:#000"></div><div class="t" style="left:722px;top:400px;height:20px;line-height:20px;font-size:11.8px;color:#000;font-weight:700;letter-spacing:0px">Abgabenverrechnung aus dem Jahr 2019</div><div style="left:721px;top:419px;width:629px;height:1px;background:#a0a0a0"></div><div style="left:722px;top:420px;width:628px;height:1px;background:#fff"></div><div style="left:721px;top:419px;width:1px;height:324px;background:#a0a0a0"></div><div style="left:722px;top:420px;width:1px;height:323px;background:#fff"></div><div style="left:724px;top:423px;width:12px;height:12px;background:#f0f0f0;border-top:1px solid #fff;border-left:1px solid #fff;border-bottom:1px solid #a0a0a0;border-right:1px solid #a0a0a0;box-sizing:border-box"></div><div style="left:727px;top:428px;width:6px;height:1px;background:#000"></div><div class="t" style="left:738px;top:419px;height:20px;line-height:20px;font-size:11.8px;color:#000;font-weight:700;letter-spacing:0px">Abgabenverrechnung vom Januar 2019</div><div style="left:737px;top:438px;width:613px;height:1px;background:#a0a0a0"></div><div style="left:738px;top:439px;width:612px;height:1px;background:#fff"></div><div style="left:737px;top:438px;width:1px;height:221px;background:#a0a0a0"></div><div style="left:738px;top:439px;width:1px;height:220px;background:#fff"></div><div style="left:740px;top:442px;width:12px;height:12px;background:#f0f0f0;border-top:1px solid #fff;border-left:1px solid #fff;border-bottom:1px solid #a0a0a0;border-right:1px solid #a0a0a0;box-sizing:border-box"></div><div style="left:743px;top:447px;width:6px;height:1px;background:#000"></div><div class="t" style="left:754px;top:438px;height:20px;line-height:20px;font-size:11.8px;color:#000;font-weight:700;letter-spacing:0px">Abgabenverrechnung mit dem/den Versicherungsträger(n)</div><div style="left:753px;top:457px;width:597px;height:20px;background:#3399ff;border:1px solid #3399ff;border-top-color:#a0a0a0;border-right:none;box-sizing:border-box"></div><div class="t" style="left:776px;top:457px;height:20px;line-height:20px;font-size:10.6px;color:#fff;font-weight:400;">Oberösterreichische Gebietskrankenkasse (999999999)</div><div class="t" style="left:1100px;top:457px;height:20px;line-height:20px;font-size:10.6px;color:#fff;font-weight:400;width:108px;text-align:right;">6.237,62</div><div class="t" style="left:1220px;top:457px;height:20px;line-height:20px;font-size:10.6px;color:#fff;font-weight:400;width:108px;text-align:right;">6.237,62</div><svg style="position:absolute;left:1332px;top:459px" width="17" height="16" viewBox="0 0 17 16"><path d="M0.8 10L5.3 5.5v3h3v3h-3v3z" fill="#f00" stroke="#000" stroke-width="1.1" stroke-linejoin="miter"/><path d="M9.3 4.3q0-2.6 3.4-2.6t3.4 2.6q0 1.8-2.4 2.8v2.2" stroke="#a06000" stroke-width="2.2" fill="none" transform="translate(.8,.8)"/><rect x="11.6" y="11.6" width="2.6" height="2.6" fill="#a06000"/><path d="M9.3 4.3q0-2.6 3.4-2.6t3.4 2.6q0 1.8-2.4 2.8v2.2" stroke="#ffff00" stroke-width="2.2" fill="none"/><rect x="10.8" y="10.8" width="2.6" height="2.6" fill="#ffff00"/></svg><div style="left:737px;top:482px;width:613px;height:1px;background:#a0a0a0"></div><div style="left:738px;top:483px;width:612px;height:1px;background:#fff"></div><div style="left:737px;top:482px;width:1px;height:177px;background:#a0a0a0"></div><div style="left:738px;top:483px;width:1px;height:176px;background:#fff"></div><div style="left:740px;top:486px;width:12px;height:12px;background:#f0f0f0;border-top:1px solid #fff;border-left:1px solid #fff;border-bottom:1px solid #a0a0a0;border-right:1px solid #a0a0a0;box-sizing:border-box"></div><div style="left:743px;top:491px;width:6px;height:1px;background:#000"></div><div class="t" style="left:754px;top:482px;height:20px;line-height:20px;font-size:11.8px;color:#000;font-weight:700;letter-spacing:0px">Abgabenverrechnung mit dem Finanzamt</div><div style="left:753px;top:501px;width:597px;height:20px;background:#fff;border:1px solid #a0a0a0;border-top-color:#a0a0a0;border-right:none;box-sizing:border-box"></div><div class="t" style="left:776px;top:501px;height:20px;line-height:20px;font-size:10.6px;color:#000;font-weight:400;">Finanzamt Musterfinanzamt</div><div class="t" style="left:1100px;top:501px;height:20px;line-height:20px;font-size:10.6px;color:#000;font-weight:400;width:108px;text-align:right;">1.722,97</div><div class="t" style="left:1220px;top:501px;height:20px;line-height:20px;font-size:10.6px;color:#000;font-weight:400;width:108px;text-align:right;">1.722,97</div><svg style="position:absolute;left:1332px;top:503px" width="17" height="16" viewBox="0 0 17 16"><path d="M0.8 10L5.3 5.5v3h3v3h-3v3z" fill="#f00" stroke="#000" stroke-width="1.1" stroke-linejoin="miter"/><path d="M9.3 4.3q0-2.6 3.4-2.6t3.4 2.6q0 1.8-2.4 2.8v2.2" stroke="#a06000" stroke-width="2.2" fill="none" transform="translate(.8,.8)"/><rect x="11.6" y="11.6" width="2.6" height="2.6" fill="#a06000"/><path d="M9.3 4.3q0-2.6 3.4-2.6t3.4 2.6q0 1.8-2.4 2.8v2.2" stroke="#ffff00" stroke-width="2.2" fill="none"/><rect x="10.8" y="10.8" width="2.6" height="2.6" fill="#ffff00"/></svg><div style="left:737px;top:526px;width:613px;height:1px;background:#a0a0a0"></div><div style="left:738px;top:527px;width:612px;height:1px;background:#fff"></div><div style="left:737px;top:526px;width:1px;height:133px;background:#a0a0a0"></div><div style="left:738px;top:527px;width:1px;height:132px;background:#fff"></div><div style="left:740px;top:530px;width:12px;height:12px;background:#f0f0f0;border-top:1px solid #fff;border-left:1px solid #fff;border-bottom:1px solid #a0a0a0;border-right:1px solid #a0a0a0;box-sizing:border-box"></div><div style="left:743px;top:535px;width:6px;height:1px;background:#000"></div><div class="t" style="left:754px;top:526px;height:20px;line-height:20px;font-size:11.8px;color:#000;font-weight:700;letter-spacing:0px">Abgabenverrechnung mit der/den Gemeinde(n)</div><div style="left:753px;top:545px;width:597px;height:20px;background:#ecdada;border:1px solid #a0a0a0;border-top-color:#a0a0a0;border-right:none;box-sizing:border-box"></div><div class="t" style="left:776px;top:545px;height:20px;line-height:20px;font-size:10.6px;color:#000;font-weight:400;">Gemeinde Mustergemeinde</div><div class="t" style="left:1100px;top:545px;height:20px;line-height:20px;font-size:10.6px;color:#000;font-weight:400;width:108px;text-align:right;">453,60</div><div class="t" style="left:1220px;top:545px;height:20px;line-height:20px;font-size:10.6px;color:#000;font-weight:400;width:108px;text-align:right;">453,60</div><svg style="position:absolute;left:1332px;top:547px" width="17" height="16" viewBox="0 0 17 16"><path d="M0.8 10L5.3 5.5v3h3v3h-3v3z" fill="#f00" stroke="#000" stroke-width="1.1" stroke-linejoin="miter"/><path d="M9.3 4.3q0-2.6 3.4-2.6t3.4 2.6q0 1.8-2.4 2.8v2.2" stroke="#a06000" stroke-width="2.2" fill="none" transform="translate(.8,.8)"/><rect x="11.6" y="11.6" width="2.6" height="2.6" fill="#a06000"/><path d="M9.3 4.3q0-2.6 3.4-2.6t3.4 2.6q0 1.8-2.4 2.8v2.2" stroke="#ffff00" stroke-width="2.2" fill="none"/><rect x="10.8" y="10.8" width="2.6" height="2.6" fill="#ffff00"/></svg><div style="left:737px;top:570px;width:613px;height:1px;background:#a0a0a0"></div><div style="left:738px;top:571px;width:612px;height:1px;background:#fff"></div><div style="left:737px;top:570px;width:1px;height:89px;background:#a0a0a0"></div><div style="left:738px;top:571px;width:1px;height:88px;background:#fff"></div><div style="left:740px;top:574px;width:12px;height:12px;background:#f0f0f0;border-top:1px solid #fff;border-left:1px solid #fff;border-bottom:1px solid #a0a0a0;border-right:1px solid #a0a0a0;box-sizing:border-box"></div><div style="left:743px;top:579px;width:6px;height:1px;background:#000"></div><div class="t" style="left:754px;top:570px;height:20px;line-height:20px;font-size:11.8px;color:#000;font-weight:700;letter-spacing:0px">Abgabenverrechnung mit den Dienstnehmer(innen)</div><div style="left:753px;top:589px;width:597px;height:20px;background:#fff;border:1px solid #a0a0a0;border-top-color:#a0a0a0;border-right:none;box-sizing:border-box"></div><div class="t" style="left:776px;top:589px;height:20px;line-height:20px;font-size:10.6px;color:#000;font-weight:400;">Zahlungen an die Dienstnehmer(innen)</div><div class="t" style="left:1100px;top:589px;height:20px;line-height:20px;font-size:10.6px;color:#000;font-weight:400;width:108px;text-align:right;">11.334,78</div><div class="t" style="left:1220px;top:589px;height:20px;line-height:20px;font-size:10.6px;color:#000;font-weight:400;width:108px;text-align:right;">11.334,78</div><svg style="position:absolute;left:1332px;top:591px" width="17" height="16" viewBox="0 0 17 16"><path d="M0.8 10L5.3 5.5v3h3v3h-3v3z" fill="#f00" stroke="#000" stroke-width="1.1" stroke-linejoin="miter"/><path d="M9.3 4.3q0-2.6 3.4-2.6t3.4 2.6q0 1.8-2.4 2.8v2.2" stroke="#a06000" stroke-width="2.2" fill="none" transform="translate(.8,.8)"/><rect x="11.6" y="11.6" width="2.6" height="2.6" fill="#a06000"/><path d="M9.3 4.3q0-2.6 3.4-2.6t3.4 2.6q0 1.8-2.4 2.8v2.2" stroke="#ffff00" stroke-width="2.2" fill="none"/><rect x="10.8" y="10.8" width="2.6" height="2.6" fill="#ffff00"/></svg><div style="left:737px;top:614px;width:613px;height:1px;background:#a0a0a0"></div><div style="left:738px;top:615px;width:612px;height:1px;background:#fff"></div><div style="left:737px;top:614px;width:1px;height:45px;background:#a0a0a0"></div><div style="left:738px;top:615px;width:1px;height:44px;background:#fff"></div><div style="left:740px;top:618px;width:12px;height:12px;background:#f0f0f0;border-top:1px solid #fff;border-left:1px solid #fff;border-bottom:1px solid #a0a0a0;border-right:1px solid #a0a0a0;box-sizing:border-box"></div><div style="left:743px;top:623px;width:6px;height:1px;background:#000"></div><div class="t" style="left:754px;top:614px;height:20px;line-height:20px;font-size:11.8px;color:#000;font-weight:700;letter-spacing:0px">Abgabenverrechnung mit Dritten (Gläubigern,...)</div><div style="left:753px;top:633px;width:597px;height:20px;background:#ecdada;border:1px solid #a0a0a0;border-top-color:#a0a0a0;border-right:none;box-sizing:border-box"></div><div class="t" style="left:776px;top:633px;height:20px;line-height:20px;font-size:10.6px;color:#000;font-weight:400;">Lohnpfändung(en)</div><div class="t" style="left:1100px;top:633px;height:20px;line-height:20px;font-size:10.6px;color:#000;font-weight:400;width:108px;text-align:right;">260,00</div><div class="t" style="left:1220px;top:633px;height:20px;line-height:20px;font-size:10.6px;color:#000;font-weight:400;width:108px;text-align:right;">260,00</div><svg style="position:absolute;left:1332px;top:635px" width="17" height="16" viewBox="0 0 17 16"><path d="M0.8 10L5.3 5.5v3h3v3h-3v3z" fill="#f00" stroke="#000" stroke-width="1.1" stroke-linejoin="miter"/><path d="M9.3 4.3q0-2.6 3.4-2.6t3.4 2.6q0 1.8-2.4 2.8v2.2" stroke="#a06000" stroke-width="2.2" fill="none" transform="translate(.8,.8)"/><rect x="11.6" y="11.6" width="2.6" height="2.6" fill="#a06000"/><path d="M9.3 4.3q0-2.6 3.4-2.6t3.4 2.6q0 1.8-2.4 2.8v2.2" stroke="#ffff00" stroke-width="2.2" fill="none"/><rect x="10.8" y="10.8" width="2.6" height="2.6" fill="#ffff00"/></svg><div style="left:737px;top:658px;width:613px;height:1px;background:#a0a0a0"></div><div class="t" style="left:762px;top:658px;height:20px;line-height:20px;font-size:10.6px;color:#f00;font-weight:400;">=</div><div class="t" style="left:776px;top:658px;height:20px;line-height:20px;font-size:10.6px;color:#f00;font-weight:400;">Restschuld vom Januar 2019</div><div class="t" style="left:1100px;top:658px;height:20px;line-height:20px;font-size:10.6px;color:#f00;font-weight:400;width:108px;text-align:right;">20.008,97</div><div class="t" style="left:1220px;top:658px;height:20px;line-height:20px;font-size:10.6px;color:#f00;font-weight:400;width:108px;text-align:right;">20.008,97</div><div style="left:721px;top:677px;width:629px;height:1px;background:#a0a0a0"></div><div style="left:722px;top:678px;width:628px;height:1px;background:#fff"></div><div style="left:721px;top:677px;width:1px;height:66px;background:#a0a0a0"></div><div style="left:722px;top:678px;width:1px;height:65px;background:#fff"></div><div style="left:724px;top:682px;width:12px;height:12px;background:#f0f0f0;border-top:1px solid #fff;border-left:1px solid #fff;border-bottom:1px solid #a0a0a0;border-right:1px solid #a0a0a0;box-sizing:border-box"></div><div style="left:727px;top:687px;width:6px;height:1px;background:#000"></div><div class="t" style="left:738px;top:677px;height:20px;line-height:20px;font-size:11.8px;color:#000;font-weight:700;letter-spacing:0px">Abgabenverrechnung vom Dezember 2019</div><div style="left:737px;top:696px;width:613px;height:1px;background:#a0a0a0"></div><div style="left:738px;top:697px;width:612px;height:1px;background:#fff"></div><div style="left:737px;top:696px;width:1px;height:45px;background:#a0a0a0"></div><div style="left:738px;top:697px;width:1px;height:44px;background:#fff"></div><div style="left:740px;top:700px;width:12px;height:12px;background:#f0f0f0;border-top:1px solid #fff;border-left:1px solid #fff;border-bottom:1px solid #a0a0a0;border-right:1px solid #a0a0a0;box-sizing:border-box"></div><div style="left:743px;top:705px;width:6px;height:1px;background:#000"></div><div class="t" style="left:754px;top:696px;height:20px;line-height:20px;font-size:11.8px;color:#000;font-weight:700;letter-spacing:0px">Abgabenverrechnung mit dem/den Versicherungsträger(n)</div><div style="left:753px;top:715px;width:597px;height:20px;background:#fff;border:1px solid #a0a0a0;border-top-color:#a0a0a0;border-right:none;box-sizing:border-box"></div><div class="t" style="left:776px;top:715px;height:20px;line-height:20px;font-size:10.6px;color:#000;font-weight:400;">Oberösterreichische Gebietskrankenkasse (999999999)</div><div class="t" style="left:1100px;top:715px;height:20px;line-height:20px;font-size:10.6px;color:#000;font-weight:400;width:108px;text-align:right;">13,29</div><div class="t" style="left:1220px;top:715px;height:20px;line-height:20px;font-size:10.6px;color:#000;font-weight:400;width:108px;text-align:right;">13,29</div><svg style="position:absolute;left:1332px;top:717px" width="17" height="16" viewBox="0 0 17 16"><path d="M0.8 10L5.3 5.5v3h3v3h-3v3z" fill="#f00" stroke="#000" stroke-width="1.1" stroke-linejoin="miter"/><path d="M9.3 4.3q0-2.6 3.4-2.6t3.4 2.6q0 1.8-2.4 2.8v2.2" stroke="#a06000" stroke-width="2.2" fill="none" transform="translate(.8,.8)"/><rect x="11.6" y="11.6" width="2.6" height="2.6" fill="#a06000"/><path d="M9.3 4.3q0-2.6 3.4-2.6t3.4 2.6q0 1.8-2.4 2.8v2.2" stroke="#ffff00" stroke-width="2.2" fill="none"/><rect x="10.8" y="10.8" width="2.6" height="2.6" fill="#ffff00"/></svg><div style="left:737px;top:740px;width:613px;height:1px;background:#a0a0a0"></div><div style="left:705px;top:742px;width:645px;height:1px;background:#a0a0a0"></div><div style="left:705px;top:743px;width:659px;height:45px;background:#fffde6;border:1px solid #696969;box-sizing:border-box"></div><div class="t" style="left:713px;top:747px;height:20px;line-height:20px;font-size:11.8px;color:#000;font-weight:700;">Abgabenschuld aus dem Jahr 2019:</div><div class="t" style="left:713px;top:764px;height:20px;line-height:20px;font-size:11.8px;color:#000;font-weight:700;">Restschuld aus dem Jahr 2019:</div><div class="t" style="left:1200px;top:747px;height:20px;line-height:20px;font-size:12.6px;color:#000;font-weight:700;width:158px;text-align:right;">20.022,26 EUR</div><div class="t" style="left:1200px;top:764px;height:20px;line-height:20px;font-size:12.6px;color:#f00;font-weight:700;width:158px;text-align:right;">20.022,26 EUR</div></body></html>
